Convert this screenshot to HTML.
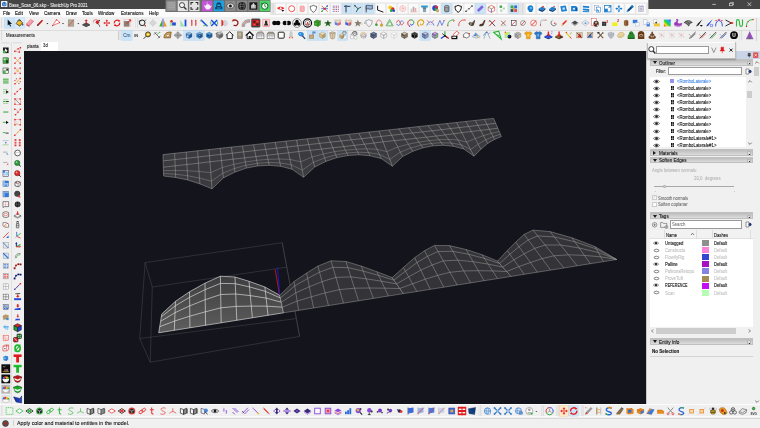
<!DOCTYPE html>
<html lang="en"><head><meta charset="utf-8"><title>Base_Scan_06.skp - SketchUp Pro 2021</title>
<style>
*{box-sizing:border-box;margin:0;padding:0}
html,body{width:760px;height:428px;overflow:hidden;background:#f0f0f0}
body{font-family:"Liberation Sans",sans-serif;font-size:4.5px;color:#000;position:relative;line-height:1}
.a{position:absolute}
.t{position:absolute;white-space:nowrap;line-height:1;transform-origin:0 0;opacity:.99}
#title{left:0;top:0;width:760px;height:8.5px;background:#454545}
#menu{left:0;top:8.5px;width:760px;height:8.5px;background:#fbfbfb}
#tb1{left:0;top:17px;width:760px;height:12.5px;background:#f0f0f0}
#tb2{left:0;top:29.5px;width:760px;height:11.7px;background:#f0f0f0;border-top:.4px solid #dcdcdc}
#tabs{left:24px;top:41.2px;width:622px;height:9.6px;background:#f0f0f0}
#left{left:0;top:41.2px;width:24px;height:362.5px;background:#f0f0f0}
#view{left:24px;top:50.8px;width:622px;height:352.8px;background:#14151c}
#bot{left:0;top:403.6px;width:760px;height:14px;background:#f0f0f0}
#status{left:0;top:417.6px;width:760px;height:10.4px;background:#f0f0f0;border-top:.4px solid #d8d8d8}
#tray{left:646px;top:50.5px;width:114px;height:353px;background:#f0f0f0}
.hdr{position:absolute;left:649.5px;width:103.5px;height:6.5px;background:linear-gradient(#bcbcbc,#dcdcdc);border:.3px solid #c0c0c0}
.hdr .t{left:8.4px;top:.6px;font-size:5.1px;color:#111;-webkit-text-stroke:.1px #111;transform:scaleX(.9);transform-origin:0 0}
.hdr i{position:absolute;left:2px;top:1.3px;width:0;height:0;border-left:2px solid transparent;border-right:2px solid transparent;border-top:3px solid #1a1a1a}
.hdr i.r{top:.9px;left:2.6px;border-top:2px solid transparent;border-bottom:2px solid transparent;border-left:3px solid #1a1a1a;border-right:0}
.hdr b{position:absolute;right:1.4px;top:1.2px;width:3.8px;height:3.8px;background:#dedede;border:.3px solid #b8b8b8}
.hdr b:after{content:"";position:absolute;left:1px;top:1.2px;width:1.2px;height:1px;background:#333}
.inp{position:absolute;background:#fff;border:.5px solid #9a9a9a}
.white{position:absolute;background:#fff}
.row{position:absolute;left:649.5px;width:96px;height:7.1px}
.eye{position:absolute;width:5.4px;height:3.2px;border:.5px solid #222;border-radius:50%;background:#333}
.eye:after{content:"";position:absolute;left:1.5px;top:.2px;width:1.3px;height:1.1px;border-radius:50%;background:#ddd}
.eye.off{border-color:#555;background:#fff;border-width:.6px}.eye.off:after{background:transparent}
.sw{position:absolute;width:6.4px;height:6px}
.g{color:#b4b4b4}
</style></head>
<body>
<div class="a" id="title"></div>
<svg class="a" style="left:1.4px;top:1px" width="6.4" height="6.4" viewBox="0 0 16 16"><rect width="16" height="16" rx="2" fill="#f4f8fc"/><path d="M8 2 13.5 5v6L8 14 2.5 11V5z" fill="#1565b8"/><path d="M4 6.3 8 8.4l4-2.1M4 8.6 8 10.7l4-2.1" stroke="#fff" stroke-width="1.1" fill="none"/></svg>
<div class="t" style="left:9.2px;top:3.00px;font-size:5.22px;color:#ededed;-webkit-text-stroke:.1px #ededed;transform:scaleX(0.830);">Base_Scan_06.skp - SketchUp Pro 2021</div>
<svg class="a" style="left:690px;top:0" width="70" height="9" viewBox="0 0 70 9"><path d="M22.3 4.4h3.6" stroke="#fff" stroke-width=".6"/><rect x="39.7" y="3.2" width="2.8" height="2.6" fill="none" stroke="#fff" stroke-width=".5"/><path d="M40.6 3.2v-.8h2.8v2.6h-.9" fill="none" stroke="#fff" stroke-width=".5"/><path d="M57.6 2.4l3.6 3.6m0-3.6l-3.6 3.6" stroke="#fff" stroke-width=".6"/></svg>
<div class="a" id="menu"></div>
<div class="t" style="left:3px;top:11.00px;font-size:5.22px;color:#000;-webkit-text-stroke:.1px #000;transform:scaleX(0.880);">File</div>
<div class="t" style="left:15.4px;top:11.00px;font-size:5.22px;color:#000;-webkit-text-stroke:.1px #000;transform:scaleX(0.880);">Edit</div>
<div class="t" style="left:29px;top:11.00px;font-size:5.22px;color:#000;-webkit-text-stroke:.1px #000;transform:scaleX(0.880);">View</div>
<div class="t" style="left:44.4px;top:11.00px;font-size:5.22px;color:#000;-webkit-text-stroke:.1px #000;transform:scaleX(0.880);">Camera</div>
<div class="t" style="left:66px;top:11.00px;font-size:5.22px;color:#000;-webkit-text-stroke:.1px #000;transform:scaleX(0.880);">Draw</div>
<div class="t" style="left:82.4px;top:11.00px;font-size:5.22px;color:#000;-webkit-text-stroke:.1px #000;transform:scaleX(0.880);">Tools</div>
<div class="t" style="left:98.4px;top:11.00px;font-size:5.22px;color:#000;-webkit-text-stroke:.1px #000;transform:scaleX(0.880);">Window</div>
<div class="t" style="left:121.4px;top:11.00px;font-size:5.22px;color:#000;-webkit-text-stroke:.1px #000;transform:scaleX(0.880);">Extensions</div>
<div class="t" style="left:149px;top:11.00px;font-size:5.22px;color:#000;-webkit-text-stroke:.1px #000;transform:scaleX(0.880);">Help</div>
<div class="a" id="tb1"></div><div class="a" id="tb2"></div>
<div class="a" style="left:755.8px;top:17.6px;width:.4px;height:23.4px;background:#d4d4d4"></div>
<div class="t" style="left:6px;top:33.20px;font-size:4.99px;color:#222;-webkit-text-stroke:.1px #222;transform:scaleX(0.880);">Measurements</div>
<div class="a" style="left:118px;top:30.6px;width:.4px;height:9.6px;background:#cfcfcf"></div>
<div class="a" id="tabs"></div>
<div class="a" style="left:25.2px;top:42.6px;width:14.4px;height:8.2px;background:#eeeeee"></div>
<div class="a" style="left:40.6px;top:41.7px;width:17.2px;height:9.1px;background:#fff"></div>
<div class="t" style="left:26.6px;top:45.30px;font-size:4.87px;color:#222;-webkit-text-stroke:.1px #222;transform:scaleX(0.880);">pianta</div>
<div class="t" style="left:42.6px;top:44.40px;font-size:4.87px;color:#222;-webkit-text-stroke:.1px #222;transform:scaleX(0.880);">3d</div>
<div class="a" id="left"></div>
<div class="a" style="left:10.7px;top:41.6px;width:1.5px;height:362px;background:#e0e0e0"></div>
<div class="a" id="view"></div>
<svg class="a" style="left:0;top:0" width="760" height="428" viewBox="0 0 760 428"><polygon points="163.0,154.6 174.6,153.3 186.2,152.1 197.6,150.8 209.0,149.6 220.2,148.3 231.4,147.1 242.5,145.9 253.5,144.7 264.4,143.5 275.2,142.3 285.9,141.1 296.6,140.0 307.2,138.8 317.6,137.7 328.1,136.5 338.4,135.4 348.6,134.3 358.8,133.2 368.9,132.1 378.9,131.0 388.9,129.9 398.8,128.8 408.6,127.7 418.3,126.6 427.9,125.6 437.5,124.5 447.0,123.5 456.5,122.5 465.9,121.4 475.2,120.4 484.4,119.4 493.6,118.4 501.4,136.6 494.5,139.4 487.7,143.4 480.9,149.2 474.0,156.2 463.8,149.0 453.6,146.3 443.4,145.3 433.2,145.8 423.0,147.8 412.8,151.3 402.6,156.5 392.4,166.2 381.3,158.6 370.2,155.8 359.1,154.8 348.0,155.5 336.9,157.6 325.8,161.4 314.7,167.0 303.6,177.3 292.2,169.3 280.7,166.3 269.2,165.3 257.8,165.9 246.4,168.1 234.9,172.1 223.4,177.9 212.0,188.8 199.9,183.9 187.8,180.0 175.7,177.5 163.6,176.0" fill="#3b3b3f" stroke="none"/><g fill="none" stroke="#acacac" stroke-width=".45"><polyline points="163.0,154.6 163.6,176.0"/><polyline points="174.6,153.3 175.7,177.5"/><polyline points="186.2,152.1 187.8,180.0"/><polyline points="197.6,150.8 199.9,183.9"/><polyline points="209.0,149.6 212.0,188.8"/><polyline points="220.2,148.3 223.4,177.9"/><polyline points="231.4,147.1 234.9,172.1"/><polyline points="242.5,145.9 246.4,168.1"/><polyline points="253.5,144.7 257.8,165.9"/><polyline points="264.4,143.5 269.2,165.3"/><polyline points="275.2,142.3 280.7,166.3"/><polyline points="285.9,141.1 292.2,169.3"/><polyline points="296.6,140.0 303.6,177.3"/><polyline points="307.2,138.8 314.7,167.0"/><polyline points="317.6,137.7 325.8,161.4"/><polyline points="328.1,136.5 336.9,157.6"/><polyline points="338.4,135.4 348.0,155.5"/><polyline points="348.6,134.3 359.1,154.8"/><polyline points="358.8,133.2 370.2,155.8"/><polyline points="368.9,132.1 381.3,158.6"/><polyline points="378.9,131.0 392.4,166.2"/><polyline points="388.9,129.9 402.6,156.5"/><polyline points="398.8,128.8 412.8,151.3"/><polyline points="408.6,127.7 423.0,147.8"/><polyline points="418.3,126.6 433.2,145.8"/><polyline points="427.9,125.6 443.4,145.3"/><polyline points="437.5,124.5 453.6,146.3"/><polyline points="447.0,123.5 463.8,149.0"/><polyline points="456.5,122.5 474.0,156.2"/><polyline points="465.9,121.4 480.9,149.2"/><polyline points="475.2,120.4 487.7,143.4"/><polyline points="484.4,119.4 494.5,139.4"/><polyline points="493.6,118.4 501.4,136.6"/><polyline points="163.0,154.6 174.6,153.3 186.2,152.1 197.6,150.8 209.0,149.6 220.2,148.3 231.4,147.1 242.5,145.9 253.5,144.7 264.4,143.5 275.2,142.3 285.9,141.1 296.6,140.0 307.2,138.8 317.6,137.7 328.1,136.5 338.4,135.4 348.6,134.3 358.8,133.2 368.9,132.1 378.9,131.0 388.9,129.9 398.8,128.8 408.6,127.7 418.3,126.6 427.9,125.6 437.5,124.5 447.0,123.5 456.5,122.5 465.9,121.4 475.2,120.4 484.4,119.4 493.6,118.4"/><polyline points="163.6,176.0 175.7,177.5 187.8,180.0 199.9,183.9 212.0,188.8 223.4,177.9 234.9,172.1 246.4,168.1 257.8,165.9 269.2,165.3 280.7,166.3 292.2,169.3 303.6,177.3 314.7,167.0 325.8,161.4 336.9,157.6 348.0,155.5 359.1,154.8 370.2,155.8 381.3,158.6 392.4,166.2 402.6,156.5 412.8,151.3 423.0,147.8 433.2,145.8 443.4,145.3 453.6,146.3 463.8,149.0 474.0,156.2 480.9,149.2 487.7,143.4 494.5,139.4 501.4,136.6"/><polyline points="163.2,160.9 174.9,159.6 186.5,158.3 198.0,157.0 209.4,155.7 220.9,154.4 232.2,153.2 243.5,151.9 254.7,150.6 265.7,149.4 276.5,148.2 287.2,147.0 297.7,145.8 308.7,144.6 319.6,143.4 330.4,142.2 341.1,141.0 351.5,139.8 361.6,138.7 371.5,137.5 381.0,136.4 391.7,135.3 402.1,134.1 412.4,133.0 422.4,131.9 432.0,130.8 441.4,129.7 450.4,128.6 459.1,127.6 468.6,126.5 477.9,125.4 486.9,124.4 495.7,123.3"/><polyline points="163.4,167.2 175.2,165.8 186.9,164.5 198.5,163.2 209.9,161.8 221.5,160.5 233.1,159.2 244.6,157.9 255.9,156.6 267.0,155.3 277.9,154.0 288.5,152.8 298.8,151.5 310.2,150.3 321.6,149.1 332.8,147.8 343.8,146.6 354.3,145.4 364.4,144.2 374.0,143.0 383.1,141.8 394.4,140.6 405.4,139.5 416.2,138.3 426.5,137.2 436.1,136.0 445.2,134.9 453.8,133.8 461.8,132.6 471.3,131.5 480.6,130.4 489.5,129.3 497.8,128.2"/><polyline points="163.5,170.7 175.4,170.5 187.3,170.7 199.0,171.5 210.7,172.6 222.3,167.5 233.8,164.3 245.3,162.0 256.7,160.3 267.9,159.3 279.0,159.0 290.0,159.4 300.7,161.8 312.0,157.0 323.3,154.0 334.4,151.7 345.5,150.2 356.2,149.2 366.7,148.8 376.9,149.3 386.8,151.6 397.7,147.0 408.4,144.2 418.9,142.1 429.2,140.6 439.0,139.7 448.6,139.4 457.8,139.9 466.7,142.1 475.1,138.6 483.5,135.6 491.5,133.3 499.2,131.6" opacity=".8"/><polyline points="163.5,173.5 175.6,174.2 187.5,175.7 199.5,178.1 211.4,181.2 222.9,173.1 234.4,168.5 245.8,165.3 257.3,163.3 268.6,162.5 279.9,162.9 291.1,164.7 302.2,170.1 313.4,162.3 324.6,157.9 335.8,154.9 346.8,153.0 357.8,152.2 368.6,152.6 379.3,154.3 389.8,159.4 400.3,152.1 410.7,148.0 421.1,145.1 431.3,143.4 441.4,142.7 451.2,143.1 461.0,144.7 470.6,149.6 478.2,144.2 485.7,139.8 493.1,136.6 500.4,134.3" opacity=".8"/></g><g stroke="#505054" stroke-width=".45" fill="none"><line x1="145.1" y1="262.6" x2="152.3" y2="287"/><line x1="145.1" y1="262.6" x2="139.7" y2="338.5"/><line x1="152.3" y1="287" x2="150.2" y2="362.2"/><line x1="139.7" y1="338.5" x2="150.2" y2="362.2"/><line x1="145.1" y1="262.6" x2="282.2" y2="242.7"/><line x1="152.3" y1="287" x2="286.8" y2="267.2"/><line x1="282.2" y1="242.7" x2="286.8" y2="267.2"/><line x1="286.8" y1="267.2" x2="299.6" y2="336.4"/><line x1="150.2" y1="362.2" x2="299.6" y2="336.4"/><line x1="282.2" y1="242.7" x2="296.4" y2="318.6"/><line x1="296.4" y1="318.6" x2="299.6" y2="336.4"/><line x1="139.7" y1="338.5" x2="296.4" y2="318.6"/></g><defs><linearGradient id="gs" x1="0" y1="0" x2="0" y2="1"><stop offset="0" stop-color="#3e3e40"/><stop offset="1" stop-color="#5e5e5e"/></linearGradient></defs><polygon points="158.7,332.8 174.3,330.3 189.9,327.8 205.5,325.3 221.2,322.8 236.8,320.3 252.4,317.8 268.0,315.3 283.6,312.8 279.8,295.3 264.9,287.0 249.0,281.3 235.0,277.0 220.4,276.2 205.0,283.2 189.5,291.8 175.5,301.3 161.8,313.9" fill="url(#gs)"/><g fill="none" stroke="#e8e8e8" stroke-width=".62"><polyline points="158.7,332.8 159.7,326.7 160.6,321.3 161.3,316.8 161.8,313.9"/><polyline points="174.3,330.3 174.7,321.0 175.0,312.7 175.3,305.8 175.5,301.3"/><polyline points="189.9,327.8 189.8,316.2 189.7,305.9 189.6,297.3 189.5,291.8"/><polyline points="205.5,325.3 205.4,311.8 205.2,299.7 205.1,289.7 205.0,283.2"/><polyline points="221.2,322.8 220.9,307.8 220.7,294.5 220.5,283.4 220.4,276.2"/><polyline points="236.8,320.3 236.2,306.4 235.7,294.0 235.3,283.7 235.0,277.0"/><polyline points="252.4,317.8 251.3,306.1 250.3,295.6 249.5,286.9 249.0,281.3"/><polyline points="268.0,315.3 267.0,306.2 266.1,298.1 265.4,291.4 264.9,287.0"/><polyline points="283.6,312.8 282.4,307.2 281.3,302.2 280.4,298.0 279.8,295.3"/><polyline points="158.7,332.8 174.3,330.3 189.9,327.8 205.5,325.3 221.2,322.8 236.8,320.3 252.4,317.8 268.0,315.3 283.6,312.8"/><polyline points="159.7,326.7 174.7,321.0 189.8,316.2 205.4,311.8 220.9,307.8 236.2,306.4 251.3,306.1 267.0,306.2 282.4,307.2"/><polyline points="160.6,321.3 175.0,312.7 189.7,305.9 205.2,299.7 220.7,294.5 235.7,294.0 250.3,295.6 266.1,298.1 281.3,302.2"/><polyline points="161.3,316.8 175.3,305.8 189.6,297.3 205.1,289.7 220.5,283.4 235.3,283.7 249.5,286.9 265.4,291.4 280.4,298.0"/><polyline points="161.8,313.9 175.5,301.3 189.5,291.8 205.0,283.2 220.4,276.2 235.0,277.0 249.0,281.3 264.9,287.0 279.8,295.3"/></g><polygon points="283.6,312.8 298.6,310.4 313.6,308.0 328.5,305.6 343.5,303.2 358.5,300.8 373.4,298.4 388.4,296.0 403.4,293.6 392.2,277.6 376.8,271.7 361.3,266.1 346.0,261.5 331.0,260.8 317.9,266.1 306.6,273.1 294.0,281.5 279.8,295.3" fill="#343438"/><g fill="none" stroke="#aaaaaa" stroke-width=".45"><polyline points="283.6,312.8 282.4,307.2 281.3,302.2 280.4,298.0 279.8,295.3"/><polyline points="298.6,310.4 297.1,301.1 295.8,292.8 294.7,285.9 294.0,281.5"/><polyline points="313.6,308.0 311.3,296.8 309.3,286.8 307.7,278.5 306.6,273.1"/><polyline points="328.5,305.6 325.1,292.9 322.1,281.6 319.5,272.2 317.9,266.1"/><polyline points="343.5,303.2 339.5,289.6 335.9,277.4 332.9,267.3 331.0,260.8"/><polyline points="358.5,300.8 354.5,288.2 350.9,276.9 347.9,267.6 346.0,261.5"/><polyline points="373.4,298.4 369.5,288.0 366.1,278.8 363.2,271.1 361.3,266.1"/><polyline points="388.4,296.0 384.7,288.2 381.4,281.2 378.6,275.4 376.8,271.7"/><polyline points="403.4,293.6 399.8,288.5 396.6,283.9 393.9,280.1 392.2,277.6"/><polyline points="283.6,312.8 298.6,310.4 313.6,308.0 328.5,305.6 343.5,303.2 358.5,300.8 373.4,298.4 388.4,296.0 403.4,293.6"/><polyline points="282.4,307.2 297.1,301.1 311.3,296.8 325.1,292.9 339.5,289.6 354.5,288.2 369.5,288.0 384.7,288.2 399.8,288.5"/><polyline points="281.3,302.2 295.8,292.8 309.3,286.8 322.1,281.6 335.9,277.4 350.9,276.9 366.1,278.8 381.4,281.2 396.6,283.9"/><polyline points="280.4,298.0 294.7,285.9 307.7,278.5 319.5,272.2 332.9,267.3 347.9,267.6 363.2,271.1 378.6,275.4 393.9,280.1"/><polyline points="279.8,295.3 294.0,281.5 306.6,273.1 317.9,266.1 331.0,260.8 346.0,261.5 361.3,266.1 376.8,271.7 392.2,277.6"/></g><polygon points="403.4,293.6 416.8,291.5 430.3,289.3 443.8,287.2 457.2,285.0 470.6,282.9 484.1,280.7 497.6,278.6 511.0,276.4 497.5,261.1 482.0,254.7 466.0,249.5 449.5,245.6 434.5,245.4 424.5,250.7 414.6,257.7 403.4,267.5 392.2,277.6" fill="#343438"/><g fill="none" stroke="#aaaaaa" stroke-width=".45"><polyline points="403.4,293.6 399.8,288.5 396.6,283.9 393.9,280.1 392.2,277.6"/><polyline points="416.8,291.5 412.5,283.8 408.7,276.9 405.5,271.2 403.4,267.5"/><polyline points="430.3,289.3 425.2,279.2 420.8,270.1 417.0,262.6 414.6,257.7"/><polyline points="443.8,287.2 437.6,275.4 432.1,265.0 427.5,256.3 424.5,250.7"/><polyline points="457.2,285.0 449.9,272.3 443.4,260.9 438.0,251.5 434.5,245.4"/><polyline points="470.6,282.9 463.8,270.9 457.8,260.2 452.8,251.3 449.5,245.6"/><polyline points="484.1,280.7 478.3,270.7 473.1,261.7 468.8,254.3 466.0,249.5"/><polyline points="497.6,278.6 492.5,270.9 488.1,264.1 484.4,258.4 482.0,254.7"/><polyline points="511.0,276.4 506.7,271.5 502.8,267.1 499.6,263.5 497.5,261.1"/><polyline points="403.4,293.6 416.8,291.5 430.3,289.3 443.8,287.2 457.2,285.0 470.6,282.9 484.1,280.7 497.6,278.6 511.0,276.4"/><polyline points="399.8,288.5 412.5,283.8 425.2,279.2 437.6,275.4 449.9,272.3 463.8,270.9 478.3,270.7 492.5,270.9 506.7,271.5"/><polyline points="396.6,283.9 408.7,276.9 420.8,270.1 432.1,265.0 443.4,260.9 457.8,260.2 473.1,261.7 488.1,264.1 502.8,267.1"/><polyline points="393.9,280.1 405.5,271.2 417.0,262.6 427.5,256.3 438.0,251.5 452.8,251.3 468.8,254.3 484.4,258.4 499.6,263.5"/><polyline points="392.2,277.6 403.4,267.5 414.6,257.7 424.5,250.7 434.5,245.4 449.5,245.6 466.0,249.5 482.0,254.7 497.5,261.1"/></g><polygon points="511.0,276.4 524.2,274.3 537.4,272.2 550.6,270.1 563.9,268.0 577.1,265.8 590.3,263.7 603.5,261.6 616.7,259.5 616.7,259.5 595.0,246.6 572.0,237.8 550.0,231.6 533.0,230.1 524.1,234.4 515.7,242.1 507.3,250.5 497.5,261.1" fill="#343438"/><g fill="none" stroke="#aaaaaa" stroke-width=".45"><polyline points="511.0,276.4 506.7,271.5 502.8,267.1 499.6,263.5 497.5,261.1"/><polyline points="524.2,274.3 518.8,266.6 513.9,259.8 509.9,254.2 507.3,250.5"/><polyline points="537.4,272.2 530.4,262.5 524.2,253.9 519.0,246.7 515.7,242.1"/><polyline points="550.6,270.1 542.1,258.6 534.5,248.4 528.2,239.9 524.1,234.4"/><polyline points="563.9,268.0 553.9,255.8 545.1,245.0 537.7,235.9 533.0,230.1"/><polyline points="577.1,265.8 568.4,254.8 560.6,245.0 554.2,236.9 550.0,231.6"/><polyline points="590.3,263.7 584.4,255.4 579.2,248.0 574.8,241.8 572.0,237.8"/><polyline points="603.5,261.6 600.8,256.8 598.3,252.5 596.3,248.9 595.0,246.6"/><polyline points="616.7,259.5 616.7,259.5 616.7,259.5 616.7,259.5 616.7,259.5"/><polyline points="511.0,276.4 524.2,274.3 537.4,272.2 550.6,270.1 563.9,268.0 577.1,265.8 590.3,263.7 603.5,261.6 616.7,259.5"/><polyline points="506.7,271.5 518.8,266.6 530.4,262.5 542.1,258.6 553.9,255.8 568.4,254.8 584.4,255.4 600.8,256.8 616.7,259.5"/><polyline points="502.8,267.1 513.9,259.8 524.2,253.9 534.5,248.4 545.1,245.0 560.6,245.0 579.2,248.0 598.3,252.5 616.7,259.5"/><polyline points="499.6,263.5 509.9,254.2 519.0,246.7 528.2,239.9 537.7,235.9 554.2,236.9 574.8,241.8 596.3,248.9 616.7,259.5"/><polyline points="497.5,261.1 507.3,250.5 515.7,242.1 524.1,234.4 533.0,230.1 550.0,231.6 572.0,237.8 595.0,246.6 616.7,259.5"/></g><line x1="275.1" y1="269.4" x2="279.5" y2="294.7" stroke="#c01818" stroke-width=".9"/><line x1="277.4" y1="267.2" x2="279.8" y2="294.7" stroke="#1818d8" stroke-width=".9"/></svg>
<div class="a" id="bot"></div><div class="a" id="status"></div>
<div class="a" style="left:0;top:403.6px;width:760px;height:1.6px;background:#fbfbfb"></div><div class="a" style="left:0;top:416.2px;width:760px;height:1.3px;background:#fbfbfb"></div>
<div class="t" style="left:17px;top:421.00px;font-size:5.68px;color:#111;-webkit-text-stroke:.1px #111;transform:scaleX(0.930);">Apply color and material to entities in the model.</div>
<svg class="a" style="left:1.8px;top:419.6px" width="7" height="7" viewBox="0 0 12 12"><circle cx="6" cy="6" r="5" fill="#555" stroke="#333" stroke-width="1.2"/><circle cx="6" cy="6" r="2.6" fill="#b02828"/></svg>
<div class="a" style="left:13.2px;top:420px;width:.4px;height:6px;background:#d0d0d0"></div>
<div class="a" id="tray"></div>
<div class="a" style="left:646px;top:50.5px;width:.5px;height:353px;background:#c8c8c8"></div>
<div class="a" style="left:647px;top:51px;width:113px;height:7.6px;background:#c9d5e6"></div>
<svg class="a" style="left:746px;top:51.6px" width="13" height="6.4" viewBox="0 0 13 6.4"><path d="M2.2 1.3h2v2.4h-2zM1.6 3.7h3.2M3.2 3.7v1.8" stroke="#333" stroke-width=".6" fill="#555"/><rect x="7.2" y=".5" width="5" height="5.4" fill="#e04848"/><path d="M8.5 1.9l2.4 2.6m0-2.6L8.5 4.5" stroke="#fff" stroke-width=".7"/></svg>
<div class="a" style="left:753.6px;top:58.6px;width:6.4px;height:345px;background:#f0f0f0"></div>
<div class="a" style="left:754.2px;top:67px;width:5.2px;height:8.6px;background:#cdcdcd"></div>
<svg class="a" style="left:754px;top:60px" width="6" height="5" viewBox="0 0 6 5"><path d="M1.2 3.4 3 1.6l1.8 1.8" stroke="#444" stroke-width=".7" fill="none"/></svg>
<svg class="a" style="left:753.6px;top:399px" width="6" height="5" viewBox="0 0 6 5"><path d="M1.2 1.6 3 3.4l1.8-1.8" stroke="#444" stroke-width=".7" fill="none"/></svg>
<div class="hdr" style="top:59px"><i></i><div class="t">Outliner</div><b></b></div>
<div class="t" style="left:655.5px;top:69.50px;font-size:4.87px;color:#111;-webkit-text-stroke:.1px #111;transform:scaleX(0.821);">Filter:</div>
<div class="inp" style="left:667.6px;top:67.2px;width:74px;height:7.5px"></div>
<svg class="a" style="left:745px;top:67.6px" width="7" height="7" viewBox="0 0 14 14"><path d="M2 2h6v10H2z" fill="#fff" stroke="#333" stroke-width="1"/><path d="M7 7 11 3.4v2.2h2v2.8h-2v2.2z" fill="#1a1a1a"/><path d="M7.6 4.4h4.4v5.2H7.6z" fill="#223a8a"/></svg>
<div class="white" style="left:649.5px;top:76.8px;width:103.5px;height:70.4px"></div>
<svg class="a" style="left:652.70px;top:78.60px" width="7" height="5" viewBox="-3.5 -2.5 7 5"><path d="M-3.1 0C-1.8-1.9 1.8-1.9 3.1 0 1.8 1.9-1.8 1.9-3.1 0z" fill="#f4f4f4" stroke="#222" stroke-width=".55"/><circle cx="0" cy="-.1" r="1.25" fill="#1a1a1a"/></svg>
<div class="a" style="left:670.3px;top:78.80px;width:4px;height:4.4px;background:#9494ea"></div>
<div class="t" style="left:676.8px;top:79.95px;font-size:4.81px;color:#3f86e8;-webkit-text-stroke:.1px #3f86e8;transform:scaleX(0.890);">&lt;RomboLaterale&gt;</div>
<svg class="a" style="left:652.70px;top:85.73px" width="7" height="5" viewBox="-3.5 -2.5 7 5"><path d="M-3.1 0C-1.8-1.9 1.8-1.9 3.1 0 1.8 1.9-1.8 1.9-3.1 0z" fill="#f4f4f4" stroke="#222" stroke-width=".55"/><circle cx="0" cy="-.1" r="1.25" fill="#1a1a1a"/></svg>
<svg class="a" style="left:670.6px;top:86.03px" width="3.8" height="4.4" viewBox="0 0 3.8 4.4"><path d="M0 0h1.6v2H0zM2.1 0h1.6v2H2.1zM0 2.3h1.6v2H0zM2.1 2.3h1.6v2H2.1z" fill="#141414"/></svg>
<div class="t" style="left:676.8px;top:87.08px;font-size:4.81px;color:#111;-webkit-text-stroke:.1px #111;transform:scaleX(0.890);">&lt;RomboLaterale&gt;</div>
<svg class="a" style="left:652.70px;top:92.86px" width="7" height="5" viewBox="-3.5 -2.5 7 5"><path d="M-3.1 0C-1.8-1.9 1.8-1.9 3.1 0 1.8 1.9-1.8 1.9-3.1 0z" fill="#f4f4f4" stroke="#222" stroke-width=".55"/><circle cx="0" cy="-.1" r="1.25" fill="#1a1a1a"/></svg>
<svg class="a" style="left:670.6px;top:93.16px" width="3.8" height="4.4" viewBox="0 0 3.8 4.4"><path d="M0 0h1.6v2H0zM2.1 0h1.6v2H2.1zM0 2.3h1.6v2H0zM2.1 2.3h1.6v2H2.1z" fill="#141414"/></svg>
<div class="t" style="left:676.8px;top:94.21px;font-size:4.81px;color:#111;-webkit-text-stroke:.1px #111;transform:scaleX(0.890);">&lt;RomboLaterale&gt;</div>
<svg class="a" style="left:652.70px;top:99.99px" width="7" height="5" viewBox="-3.5 -2.5 7 5"><path d="M-3.1 0C-1.8-1.9 1.8-1.9 3.1 0 1.8 1.9-1.8 1.9-3.1 0z" fill="#f4f4f4" stroke="#222" stroke-width=".55"/><circle cx="0" cy="-.1" r="1.25" fill="#1a1a1a"/></svg>
<svg class="a" style="left:670.6px;top:100.29px" width="3.8" height="4.4" viewBox="0 0 3.8 4.4"><path d="M0 0h1.6v2H0zM2.1 0h1.6v2H2.1zM0 2.3h1.6v2H0zM2.1 2.3h1.6v2H2.1z" fill="#141414"/></svg>
<div class="t" style="left:676.8px;top:101.34px;font-size:4.81px;color:#111;-webkit-text-stroke:.1px #111;transform:scaleX(0.890);">&lt;RomboLaterale&gt;</div>
<svg class="a" style="left:652.70px;top:107.12px" width="7" height="5" viewBox="-3.5 -2.5 7 5"><path d="M-3.1 0C-1.8-1.9 1.8-1.9 3.1 0 1.8 1.9-1.8 1.9-3.1 0z" fill="#f4f4f4" stroke="#222" stroke-width=".55"/><circle cx="0" cy="-.1" r="1.25" fill="#1a1a1a"/></svg>
<svg class="a" style="left:670.6px;top:107.42px" width="3.8" height="4.4" viewBox="0 0 3.8 4.4"><path d="M0 0h1.6v2H0zM2.1 0h1.6v2H2.1zM0 2.3h1.6v2H0zM2.1 2.3h1.6v2H2.1z" fill="#141414"/></svg>
<div class="t" style="left:676.8px;top:108.47px;font-size:4.81px;color:#111;-webkit-text-stroke:.1px #111;transform:scaleX(0.890);">&lt;RomboLaterale&gt;</div>
<svg class="a" style="left:652.70px;top:114.25px" width="7" height="5" viewBox="-3.5 -2.5 7 5"><path d="M-3.1 0C-1.8-1.9 1.8-1.9 3.1 0 1.8 1.9-1.8 1.9-3.1 0z" fill="#f4f4f4" stroke="#222" stroke-width=".55"/><circle cx="0" cy="-.1" r="1.25" fill="#1a1a1a"/></svg>
<svg class="a" style="left:670.6px;top:114.55px" width="3.8" height="4.4" viewBox="0 0 3.8 4.4"><path d="M0 0h1.6v2H0zM2.1 0h1.6v2H2.1zM0 2.3h1.6v2H0zM2.1 2.3h1.6v2H2.1z" fill="#141414"/></svg>
<div class="t" style="left:676.8px;top:115.60px;font-size:4.81px;color:#111;-webkit-text-stroke:.1px #111;transform:scaleX(0.890);">&lt;RomboLaterale&gt;</div>
<svg class="a" style="left:652.70px;top:121.38px" width="7" height="5" viewBox="-3.5 -2.5 7 5"><path d="M-3.1 0C-1.8-1.9 1.8-1.9 3.1 0 1.8 1.9-1.8 1.9-3.1 0z" fill="#f4f4f4" stroke="#222" stroke-width=".55"/><circle cx="0" cy="-.1" r="1.25" fill="#1a1a1a"/></svg>
<svg class="a" style="left:670.6px;top:121.68px" width="3.8" height="4.4" viewBox="0 0 3.8 4.4"><path d="M0 0h1.6v2H0zM2.1 0h1.6v2H2.1zM0 2.3h1.6v2H0zM2.1 2.3h1.6v2H2.1z" fill="#141414"/></svg>
<div class="t" style="left:676.8px;top:122.73px;font-size:4.81px;color:#111;-webkit-text-stroke:.1px #111;transform:scaleX(0.890);">&lt;RomboLaterale&gt;</div>
<svg class="a" style="left:652.70px;top:128.51px" width="7" height="5" viewBox="-3.5 -2.5 7 5"><path d="M-3.1 0C-1.8-1.9 1.8-1.9 3.1 0 1.8 1.9-1.8 1.9-3.1 0z" fill="#f4f4f4" stroke="#222" stroke-width=".55"/><circle cx="0" cy="-.1" r="1.25" fill="#1a1a1a"/></svg>
<svg class="a" style="left:670.6px;top:128.81px" width="3.8" height="4.4" viewBox="0 0 3.8 4.4"><path d="M0 0h1.6v2H0zM2.1 0h1.6v2H2.1zM0 2.3h1.6v2H0zM2.1 2.3h1.6v2H2.1z" fill="#141414"/></svg>
<div class="t" style="left:676.8px;top:129.86px;font-size:4.81px;color:#111;-webkit-text-stroke:.1px #111;transform:scaleX(0.890);">&lt;RomboLaterale&gt;</div>
<svg class="a" style="left:652.70px;top:135.64px" width="7" height="5" viewBox="-3.5 -2.5 7 5"><path d="M-3.1 0C-1.8-1.9 1.8-1.9 3.1 0 1.8 1.9-1.8 1.9-3.1 0z" fill="#f4f4f4" stroke="#222" stroke-width=".55"/><circle cx="0" cy="-.1" r="1.25" fill="#1a1a1a"/></svg>
<svg class="a" style="left:670.6px;top:135.94px" width="3.8" height="4.4" viewBox="0 0 3.8 4.4"><path d="M0 0h1.6v2H0zM2.1 0h1.6v2H2.1zM0 2.3h1.6v2H0zM2.1 2.3h1.6v2H2.1z" fill="#141414"/></svg>
<div class="t" style="left:676.8px;top:136.99px;font-size:4.81px;color:#111;-webkit-text-stroke:.1px #111;transform:scaleX(0.902);">&lt;RomboLaterale#1&gt;</div>
<svg class="a" style="left:652.70px;top:142.77px" width="7" height="5" viewBox="-3.5 -2.5 7 5"><path d="M-3.1 0C-1.8-1.9 1.8-1.9 3.1 0 1.8 1.9-1.8 1.9-3.1 0z" fill="#f4f4f4" stroke="#222" stroke-width=".55"/><circle cx="0" cy="-.1" r="1.25" fill="#1a1a1a"/></svg>
<svg class="a" style="left:670.6px;top:143.07px" width="3.8" height="4.4" viewBox="0 0 3.8 4.4"><path d="M0 0h1.6v2H0zM2.1 0h1.6v2H2.1zM0 2.3h1.6v2H0zM2.1 2.3h1.6v2H2.1z" fill="#141414"/></svg>
<div class="t" style="left:676.8px;top:144.12px;font-size:4.81px;color:#111;-webkit-text-stroke:.1px #111;transform:scaleX(0.902);">&lt;RomboLaterale#1&gt;</div>
<div class="a" style="left:746.2px;top:77px;width:6.6px;height:70px;background:#f1f1f1"></div>
<div class="a" style="left:746.8px;top:91px;width:5.4px;height:6.6px;background:#cdcdcd"></div>
<svg class="a" style="left:746.5px;top:78.6px" width="6" height="5" viewBox="0 0 6 5"><path d="M1.2 3.4 3 1.6l1.8 1.8" stroke="#444" stroke-width=".7" fill="none"/></svg>
<svg class="a" style="left:746.5px;top:141px" width="6" height="5" viewBox="0 0 6 5"><path d="M1.2 1.6 3 3.4l1.8-1.8" stroke="#444" stroke-width=".7" fill="none"/></svg>
<div class="hdr" style="top:149.2px"><i class="r"></i><div class="t">Materials</div><b></b></div>
<div class="hdr" style="top:156.9px"><i></i><div class="t">Soften Edges</div><b></b></div>
<div class="t" style="left:652px;top:168.50px;font-size:4.76px;color:#b6b6b6;-webkit-text-stroke:.1px #b6b6b6;transform:scaleX(0.882);">Angle between normals:</div>
<div class="t" style="left:693.8px;top:177.10px;font-size:4.76px;color:#b6b6b6;-webkit-text-stroke:.1px #b6b6b6;transform:scaleX(0.914);">20,0&nbsp; degrees</div>
<div class="a" style="left:654px;top:186.2px;width:80px;height:.6px;background:#a8a8a8"></div>
<div class="a" style="left:663px;top:184.8px;width:2.5px;height:3.6px;background:#dcdcdc;border:.4px solid #b0b0b0;border-radius:1px"></div>
<div class="a" style="left:654.5px;top:190.6px;width:.5px;height:1.2px;background:#ccc"></div><div class="a" style="left:733.5px;top:190.6px;width:.5px;height:1.2px;background:#ccc"></div>
<div class="a" style="left:651.9px;top:194.7px;width:4.9px;height:5.2px;background:#fafafa;border:.4px solid #cdcdcd"></div>
<svg class="a" style="left:652.3px;top:195.2px" width="4.2" height="4.2" viewBox="0 0 4 4"><path d="M.7 2l1 1L3.4.8" stroke="#c0c0c0" stroke-width=".6" fill="none"/></svg>
<div class="a" style="left:651.9px;top:201.6px;width:4.9px;height:5.2px;background:#fdfdfd;border:.4px solid #cdcdcd"></div>
<div class="t" style="left:658px;top:196.70px;font-size:4.76px;color:#707070;-webkit-text-stroke:.1px #707070;transform:scaleX(0.866);">Smooth normals</div>
<div class="t" style="left:658px;top:203.20px;font-size:4.76px;color:#707070;-webkit-text-stroke:.1px #707070;transform:scaleX(0.888);">Soften coplanar</div>
<div class="hdr" style="top:212.4px"><i></i><div class="t">Tags</div><b></b></div>
<svg class="a" style="left:650.6px;top:220.6px" width="18" height="8" viewBox="0 0 18 8"><circle cx="3.6" cy="3.8" r="2.3" fill="none" stroke="#444" stroke-width=".5"/><path d="M2.4 3.8h2.4M3.6 2.6V5" stroke="#444" stroke-width=".5"/><path d="M9.6 1.6h2.2l.6.8h3.4v4h-6.2z" fill="none" stroke="#444" stroke-width=".5"/><circle cx="15.4" cy="6" r="1.5" fill="#f0f0f0" stroke="#444" stroke-width=".45"/><path d="M14.6 6h1.6M15.4 5.2v1.6" stroke="#444" stroke-width=".4"/></svg>
<div class="inp" style="left:670px;top:220.4px;width:71.6px;height:8.2px"></div>
<div class="t" style="left:672.4px;top:223.40px;font-size:4.76px;color:#808080;-webkit-text-stroke:.1px #808080;transform:scaleX(0.880);">Search</div>
<svg class="a" style="left:745px;top:221px" width="7" height="7" viewBox="0 0 14 14"><path d="M2 2h6v10H2z" fill="#fff" stroke="#333" stroke-width="1"/><path d="M7 7 11 3.4v2.2h2v2.8h-2v2.2z" fill="#1a1a1a"/><path d="M7.6 4.4h4.4v5.2H7.6z" fill="#223a8a"/></svg>
<div class="white" style="left:649.5px;top:230px;width:103.5px;height:105px"></div>
<div class="a" style="left:649.5px;top:230px;width:103.5px;height:8.8px;background:#f2f2f2;border-bottom:.4px solid #e0e0e0"></div>
<div class="a" style="left:663.6px;top:230px;width:.4px;height:8.8px;background:#dcdcdc"></div>
<div class="a" style="left:696px;top:230px;width:.4px;height:8.8px;background:#dcdcdc"></div>
<div class="a" style="left:711.8px;top:230px;width:.4px;height:8.8px;background:#dcdcdc"></div>
<div class="a" style="left:749.6px;top:230px;width:.4px;height:8.8px;background:#dcdcdc"></div>
<div class="t" style="left:666px;top:233.90px;font-size:4.76px;color:#111;-webkit-text-stroke:.1px #111;transform:scaleX(0.880);">Name</div>
<div class="t" style="left:714px;top:233.90px;font-size:4.76px;color:#111;-webkit-text-stroke:.1px #111;transform:scaleX(0.880);">Dashes</div>
<svg class="a" style="left:689.6px;top:232.4px" width="5" height="4" viewBox="0 0 5 4"><path d="M1 3 2.5 1.2 4 3" stroke="#333" stroke-width=".6" fill="none"/></svg>
<svg class="a" style="left:653.10px;top:240.50px" width="6" height="4.3" viewBox="-3.5 -2.5 7 5"><path d="M-3.1 0C-1.8-1.9 1.8-1.9 3.1 0 1.8 1.9-1.8 1.9-3.1 0z" fill="#f4f4f4" stroke="#222" stroke-width=".55"/><circle cx="0" cy="-.1" r="1.25" fill="#1a1a1a"/></svg>
<div class="t" style="left:664.8px;top:241.70px;font-size:4.76px;color:#111;-webkit-text-stroke:.1px #111;transform:scaleX(0.892);">Untagged</div>
<div class="sw" style="left:702.2px;top:240.00px;background:#8f8f8f"></div>
<div class="t" style="left:714px;top:241.70px;font-size:4.76px;color:#111;-webkit-text-stroke:.1px #111;transform:scaleX(0.880);">Default</div>
<svg class="a" style="left:653.10px;top:247.62px" width="7" height="5" viewBox="-3.5 -2.5 7 5"><path d="M-2.7 0C-1.6-1.7 1.6-1.7 2.7 0 1.6 1.7-1.6 1.7-2.7 0z" fill="#fff" stroke="#333" stroke-width=".6"/></svg>
<div class="t" style="left:664.8px;top:248.82px;font-size:4.76px;color:#c0c0c0;-webkit-text-stroke:.1px #c0c0c0;transform:scaleX(0.880);">Constructo</div>
<div class="sw" style="left:702.2px;top:247.12px;background:#ff82da"></div>
<div class="t" style="left:714px;top:248.82px;font-size:4.76px;color:#c4c4c4;-webkit-text-stroke:.1px #c4c4c4;transform:scaleX(0.880);">Default</div>
<svg class="a" style="left:653.10px;top:254.74px" width="7" height="5" viewBox="-3.5 -2.5 7 5"><path d="M-2.7 0C-1.6-1.7 1.6-1.7 2.7 0 1.6 1.7-1.6 1.7-2.7 0z" fill="#fff" stroke="#333" stroke-width=".6"/></svg>
<div class="t" style="left:664.8px;top:255.94px;font-size:4.76px;color:#c0c0c0;-webkit-text-stroke:.1px #c0c0c0;transform:scaleX(0.880);">FlowifyRig</div>
<div class="sw" style="left:702.2px;top:254.24px;background:#3446d2"></div>
<div class="t" style="left:714px;top:255.94px;font-size:4.76px;color:#c4c4c4;-webkit-text-stroke:.1px #c4c4c4;transform:scaleX(0.880);">Default</div>
<svg class="a" style="left:653.10px;top:261.86px" width="6" height="4.3" viewBox="-3.5 -2.5 7 5"><path d="M-3.1 0C-1.8-1.9 1.8-1.9 3.1 0 1.8 1.9-1.8 1.9-3.1 0z" fill="#f4f4f4" stroke="#222" stroke-width=".55"/><circle cx="0" cy="-.1" r="1.25" fill="#1a1a1a"/></svg>
<div class="t" style="left:664.8px;top:263.06px;font-size:4.76px;color:#111;-webkit-text-stroke:.1px #111;transform:scaleX(0.882);">Palline</div>
<div class="sw" style="left:702.2px;top:261.36px;background:#a611c4"></div>
<div class="t" style="left:714px;top:263.06px;font-size:4.76px;color:#111;-webkit-text-stroke:.1px #111;transform:scaleX(0.880);">Default</div>
<svg class="a" style="left:653.10px;top:268.98px" width="7" height="5" viewBox="-3.5 -2.5 7 5"><path d="M-2.7 0C-1.6-1.7 1.6-1.7 2.7 0 1.6 1.7-1.6 1.7-2.7 0z" fill="#fff" stroke="#333" stroke-width=".6"/></svg>
<div class="t" style="left:664.8px;top:270.18px;font-size:4.76px;color:#c0c0c0;-webkit-text-stroke:.1px #c0c0c0;transform:scaleX(0.880);">PoltronaRetopo</div>
<div class="sw" style="left:702.2px;top:268.48px;background:#8682e0"></div>
<div class="t" style="left:714px;top:270.18px;font-size:4.76px;color:#c4c4c4;-webkit-text-stroke:.1px #c4c4c4;transform:scaleX(0.880);">Default</div>
<svg class="a" style="left:653.10px;top:276.10px" width="7" height="5" viewBox="-3.5 -2.5 7 5"><path d="M-2.7 0C-1.6-1.7 1.6-1.7 2.7 0 1.6 1.7-1.6 1.7-2.7 0z" fill="#fff" stroke="#333" stroke-width=".6"/></svg>
<div class="t" style="left:664.8px;top:277.30px;font-size:4.76px;color:#c0c0c0;-webkit-text-stroke:.1px #c0c0c0;transform:scaleX(0.880);">ProveTuft</div>
<div class="sw" style="left:702.2px;top:275.60px;background:#a48a56"></div>
<div class="t" style="left:714px;top:277.30px;font-size:4.76px;color:#c4c4c4;-webkit-text-stroke:.1px #c4c4c4;transform:scaleX(0.880);">Default</div>
<svg class="a" style="left:653.10px;top:283.22px" width="6" height="4.3" viewBox="-3.5 -2.5 7 5"><path d="M-3.1 0C-1.8-1.9 1.8-1.9 3.1 0 1.8 1.9-1.8 1.9-3.1 0z" fill="#f4f4f4" stroke="#222" stroke-width=".55"/><circle cx="0" cy="-.1" r="1.25" fill="#1a1a1a"/></svg>
<div class="t" style="left:664.8px;top:284.42px;font-size:4.76px;color:#111;-webkit-text-stroke:.1px #111;transform:scaleX(0.770);">REFERENCE</div>
<div class="sw" style="left:702.2px;top:282.72px;background:#c40ff4"></div>
<div class="t" style="left:714px;top:284.42px;font-size:4.76px;color:#111;-webkit-text-stroke:.1px #111;transform:scaleX(0.880);">Default</div>
<svg class="a" style="left:653.10px;top:290.34px" width="7" height="5" viewBox="-3.5 -2.5 7 5"><path d="M-2.7 0C-1.6-1.7 1.6-1.7 2.7 0 1.6 1.7-1.6 1.7-2.7 0z" fill="#fff" stroke="#333" stroke-width=".6"/></svg>
<div class="t" style="left:664.8px;top:291.54px;font-size:4.76px;color:#c0c0c0;-webkit-text-stroke:.1px #c0c0c0;transform:scaleX(0.880);">Scan</div>
<div class="sw" style="left:702.2px;top:289.84px;background:#b4ffb4"></div>
<div class="t" style="left:714px;top:291.54px;font-size:4.76px;color:#c4c4c4;-webkit-text-stroke:.1px #c4c4c4;transform:scaleX(0.880);">Default</div>
<div class="a" style="left:649.5px;top:327.4px;width:103.5px;height:7.4px;background:#f1f1f1"></div>
<div class="a" style="left:656px;top:328.2px;width:80px;height:5.8px;background:#cdcdcd"></div>
<svg class="a" style="left:650px;top:328px" width="5" height="6" viewBox="0 0 5 6"><path d="M3.2 1.4 1.6 3l1.6 1.6" stroke="#444" stroke-width=".7" fill="none"/></svg>
<svg class="a" style="left:747px;top:328px" width="5" height="6" viewBox="0 0 5 6"><path d="M1.8 1.4 3.4 3 1.8 4.6" stroke="#444" stroke-width=".7" fill="none"/></svg>
<div class="hdr" style="top:338.2px"><i></i><div class="t">Entity Info</div><b></b></div>
<div class="t" style="left:652px;top:349.80px;font-size:4.87px;color:#111;-webkit-text-stroke:.1px #111;transform:scaleX(0.922);font-weight:bold">No Selection</div>
<div class="a" style="left:650px;top:355.8px;width:102.6px;height:.5px;background:#d4d4d4"></div>
<div class="a" style="left:646.6px;top:41.5px;width:89.2px;height:17.5px;background:#f0f0f0;border:.4px solid #bdbdbd;box-shadow:0 .6px 1.2px rgba(0,0,0,.25)"></div>
<div class="a" style="left:647px;top:41.9px;width:88.4px;height:1.4px;background:#fcfcfc"></div>
<div class="inp" style="left:656.4px;top:46px;width:52.4px;height:8.4px"></div>
<svg class="a" style="left:647.6px;top:46px" width="8" height="8" viewBox="0 0 8 8"><circle cx="3.3" cy="3.1" r="2.5" fill="#fff" stroke="#2a2a2a" stroke-width=".95"/><path d="M5.1 5 7.4 7.4" stroke="#2a2a2a" stroke-width="1.4"/></svg>
<svg class="a" style="left:710px;top:46px" width="26" height="8" viewBox="0 0 26 8"><path d="M1.6 1.6 3.8 6.6 6 1.6" stroke="#777" stroke-width=".75" fill="none"/><path d="M11 1.2h2.6v2.6l.9 1.1h-4.4l.9-1.1zM12.3 4.9v2.4" fill="#e01818" stroke="#e01818" stroke-width=".5"/><path d="M19.6 2.6l3 3m0-3l-3 3" stroke="#111" stroke-width=".9"/></svg>
<svg class="a" style="left:0;top:0;filter:blur(.25px)" width="760" height="428" viewBox="0 0 760 428"><rect x="165.4" y="0" width="105.4" height="12" fill="#6c6c6c"/><rect x="166.20000000000002" y="0.6" width="10.2" height="10.6" fill="#8c8c8c"/><g transform="translate(171.3,5.9)"><path d="M-3.4 -3.6L-3.4 3.6" stroke="#b8b8b8" stroke-width="0.45" fill="none"/><path d="M-3.6 -3.4L3.6 -3.4" stroke="#b8b8b8" stroke-width="0.45" fill="none"/><path d="M-1.7 -3.6L-1.7 3.6" stroke="#b8b8b8" stroke-width="0.45" fill="none"/><path d="M-3.6 -1.7L3.6 -1.7" stroke="#b8b8b8" stroke-width="0.45" fill="none"/><path d="M0.0 -3.6L0.0 3.6" stroke="#b8b8b8" stroke-width="0.45" fill="none"/><path d="M-3.6 0.0L3.6 0.0" stroke="#b8b8b8" stroke-width="0.45" fill="none"/><path d="M1.6999999999999997 -3.6L1.6999999999999997 3.6" stroke="#b8b8b8" stroke-width="0.45" fill="none"/><path d="M-3.6 1.6999999999999997L3.6 1.6999999999999997" stroke="#b8b8b8" stroke-width="0.45" fill="none"/><path d="M3.4 -3.6L3.4 3.6" stroke="#b8b8b8" stroke-width="0.45" fill="none"/><path d="M-3.6 3.4L3.6 3.4" stroke="#b8b8b8" stroke-width="0.45" fill="none"/></g><rect x="177.70000000000002" y="0.6" width="10.2" height="10.6" fill="#e4e4e4"/><g transform="translate(182.8,5.9)"><circle cx="-0.8" cy="-0.8" r="2.5" fill="#f8f8f8" stroke="#333" stroke-width="0.9"/><path d="M1.1 1.1L3.6 3.6" stroke="#333" stroke-width="1.3" fill="none"/></g><rect x="189.3" y="0.6" width="10.2" height="10.6" fill="#e4e4e4"/><g transform="translate(194.4,5.9)"><path d="M-3.4-1.2v-2.2h2.2M1.2-3.4h2.2v2.2M3.4 1.2v2.2H1.2M-1.2 3.4h-2.2V1.2" fill="none" stroke="#2a2a2a" stroke-width="1.1" /></g><rect x="202.1" y="0.6" width="10.2" height="10.6" fill="#c255d6"/><g transform="translate(207.2,5.9)"><path d="M-3.6-.6c1 0 1.4.4 1.8 1 .2-1.4 1.2-2 2.4-2s2.2.6 2.4 2l1.2-1.2v1.4L3 2.4c-.4.9-1.4 1.2-2.4 1.2S-1.4 3.3-1.8 2.4C-2.4 1.2-2.6.4-3.6-.6zM0-2.4c.5 0 .8-.2.8-.5S.5-3.4 0-3.4s-.8.2-.8.5.3.5.8.5z" fill="#fbeefe" /></g><rect x="213.70000000000002" y="0.6" width="10.2" height="10.6" fill="#1da2e4"/><g transform="translate(218.8,5.9)"><path d="M-2.6-.6C-2.6-2.6-1.4-3.6 0-3.6S2.6-2.6 2.6-.6V1h1v2.4h-7.2V1h1z" fill="#123c5e" /><rect x="-1.6" y="-1.4" width="3.2" height="1.6" fill="#1da2e4"/><rect x="-2" y="1.6" width="4" height="1" fill="#1da2e4"/></g><rect x="225.3" y="0.6" width="10.2" height="10.6" fill="#8a8a8a"/><g transform="translate(230.4,5.9)"><path d="M-4 0C-2.6-2.2-1.2-2.8 0-2.8S2.6-2.2 4 0C2.6 2.2 1.2 2.8 0 2.8S-2.6 2.2-4 0z" fill="#dcdcdc" stroke="#222" stroke-width="0.6" /><circle cx="0" cy="0" r="1.5" fill="#1a1a1a"/></g><rect x="236.9" y="0.6" width="10.2" height="10.6" fill="#8a8a8a"/><g transform="translate(242.0,5.9)"><circle cx="0" cy="0" r="3.9" fill="#1c1c1c"/><path d="M-3.6-.6C-1.6-2 1.6-2 3.6-.6M-3.4 1.4C-1.4.2 1.4.2 3.4 1.4M-1-3.6C-2 -1-2 1.4-1 3.6M1.4-3.4c1 2.4 1 4.6 0 6.8" fill="none" stroke="#9a9a9a" stroke-width="0.45" /></g><rect x="248.3" y="0.6" width="10.2" height="10.6" fill="#8a8a8a"/><g transform="translate(253.4,5.9)"><rect x="-4" y="-3.6" width="8" height="7.4" fill="#1c1c1c"/><rect x="-2.4" y="-1" width="4.8" height="3.6" fill="#bdbdbd"/><path d="M0-3l1.6 1.8h-3.2z" fill="#e8e8e8" /><rect x="-0.6" y="-1.4" width="1.2" height="2.2" fill="#e8e8e8"/></g><rect x="259.7" y="0.6" width="10.2" height="10.6" fill="#4fd466"/><g transform="translate(264.8,5.9)"><circle cx="0" cy="0.2" r="3.2" fill="#f2fff2" stroke="#0d6a2a" stroke-width="1"/><path d="M0-1.8V.4l1.6 1" fill="none" stroke="#0d6a2a" stroke-width="0.8" /><path d="M-3.8-1.6l1-1.8.9 1.8z" fill="#0d6a2a" /></g><rect x="270.6" y="0" width="377.6" height="14.6" fill="#e8e8e8" stroke="#c4c4c4" stroke-width="0.3"/><rect x="270.8" y="0" width="377.2" height="2.4" fill="#fbfbfb"/><path d="M273 3V13.4" stroke="#b8b8b8" stroke-width=".8" stroke-dasharray=".5 .5"/><rect x="519.6" y="2.4" width="1" height="12" fill="#e0e0e0"/><path d="M522.6 3V13.4" stroke="#b8b8b8" stroke-width=".8" stroke-dasharray=".5 .5"/><rect x="275.8" y="3.6" width="9.8" height="10.2" fill="#fafafa" stroke="#e4e4e4" stroke-width="0.3"/><g transform="translate(280.7,8.7)"><path d="M-3.6-.4C-2.2-2.4 2.2-2.4 3.6-.4 2.2 1.4-2.2 1.4-3.6-.4z" fill="#f02020" /><circle cx="0" cy="-0.5" r="1" fill="#fff"/><path d="M.6 1.2h3l-1.5 1.8z" fill="#111" /></g><rect x="286.8" y="3.6" width="9.8" height="10.2" fill="#fafafa" stroke="#e4e4e4" stroke-width="0.3"/><g transform="translate(291.7,8.7)"><circle cx="0" cy="0" r="3" fill="#fff" stroke="#f03030" stroke-width="0.8"/></g><rect x="297.3" y="3.6" width="9.8" height="10.2" fill="#fafafa" stroke="#e4e4e4" stroke-width="0.3"/><g transform="translate(302.2,8.7)"><rect x="-2.2" y="-2.8" width="4.4" height="5.8" fill="#f8b4b4" stroke="#f07070" stroke-width="0.4" rx="1"/></g><rect x="308.5" y="3.6" width="9.8" height="10.2" fill="#fafafa" stroke="#e4e4e4" stroke-width="0.3"/><g transform="translate(313.4,8.7)"><path d="M0-3.4C1.2-2.6 2.4-2.4 3.2-2.4 3.2.8 2 2.6 0 3.6-2 2.6-3.2.8-3.2-2.4-2.4-2.4-1.2-2.6 0-3.4z" fill="#fff" stroke="#333" stroke-width="0.7" /></g><rect x="319.70000000000005" y="3.6" width="9.8" height="10.2" fill="#fafafa" stroke="#e4e4e4" stroke-width="0.3"/><g transform="translate(324.6,8.7)"><path d="M-3 -3L3 3" stroke="#e02020" stroke-width="0.7" fill="none"/><path d="M3 -3L-3 3" stroke="#20a020" stroke-width="0.7" fill="none"/><path d="M-3.4 0L3.4 0" stroke="#2040e0" stroke-width="0.7" fill="none"/><circle cx="0" cy="0" r="1" fill="#e02020"/><circle cx="2.6" cy="-2.6" r="0.8" fill="#2040e0"/><circle cx="-2.6" cy="2.6" r="0.8" fill="#20a020"/></g><rect x="330.90000000000003" y="3.6" width="9.8" height="10.2" fill="#fafafa" stroke="#e4e4e4" stroke-width="0.3"/><g transform="translate(335.8,8.7)"><circle cx="-2.6" cy="-2.6" r="0.55" fill="#e03030"/><circle cx="-2.6" cy="-0.9000000000000001" r="0.55" fill="#3050e0"/><circle cx="-2.6" cy="0.7999999999999998" r="0.55" fill="#e03030"/><circle cx="-2.6" cy="2.4999999999999996" r="0.55" fill="#3050e0"/><circle cx="-0.9000000000000001" cy="-2.6" r="0.55" fill="#3050e0"/><circle cx="-0.9000000000000001" cy="-0.9000000000000001" r="0.55" fill="#e03030"/><circle cx="-0.9000000000000001" cy="0.7999999999999998" r="0.55" fill="#3050e0"/><circle cx="-0.9000000000000001" cy="2.4999999999999996" r="0.55" fill="#e03030"/><circle cx="0.7999999999999998" cy="-2.6" r="0.55" fill="#e03030"/><circle cx="0.7999999999999998" cy="-0.9000000000000001" r="0.55" fill="#3050e0"/><circle cx="0.7999999999999998" cy="0.7999999999999998" r="0.55" fill="#e03030"/><circle cx="0.7999999999999998" cy="2.4999999999999996" r="0.55" fill="#3050e0"/><circle cx="2.4999999999999996" cy="-2.6" r="0.55" fill="#3050e0"/><circle cx="2.4999999999999996" cy="-0.9000000000000001" r="0.55" fill="#e03030"/><circle cx="2.4999999999999996" cy="0.7999999999999998" r="0.55" fill="#3050e0"/><circle cx="2.4999999999999996" cy="2.4999999999999996" r="0.55" fill="#e03030"/></g><rect x="342.1" y="3.6" width="9.8" height="10.2" fill="#cce4f7" stroke="#a8cdee" stroke-width="0.3"/><g transform="translate(347.0,8.7)"><path d="M-3-2.4h6.4M-1-3.6v7.2" fill="none" stroke="#222" stroke-width="0.9" /><circle cx="-1" cy="-2.4" r="0.9" fill="#3a6ea8"/></g><rect x="353.0" y="3.6" width="9.8" height="10.2" fill="#cce4f7" stroke="#a8cdee" stroke-width="0.3"/><g transform="translate(357.9,8.7)"><path d="M-3-3l3 3 3.2-1.6M0 0l-1.6 3.4" fill="none" stroke="#333" stroke-width="0.8" /><circle cx="0" cy="0" r="0.9" fill="#3a8a4a"/><circle cx="-3" cy="-3" r="0.7" fill="#222"/></g><rect x="364.3" y="3.6" width="9.8" height="10.2" fill="#cce4f7" stroke="#a8cdee" stroke-width="0.3"/><g transform="translate(369.2,8.7)"><path d="M-3 3.6V-3.2" fill="none" stroke="#223" stroke-width="0.8" /><path d="M-3-3.2c2-1 3.6.8 6.2-.2v3.6c-2.6 1-4.2-.8-6.2.2z" fill="#9ab4d6" stroke="#223" stroke-width="0.6" /></g><rect x="375.5" y="3.6" width="9.8" height="10.2" fill="#fafafa" stroke="#e4e4e4" stroke-width="0.3"/><g transform="translate(380.4,8.7)"><path d="M-2.8-3v4.4l5.8 2" fill="none" stroke="#1a1a1a" stroke-width="1" /></g><rect x="386.70000000000005" y="3.6" width="9.8" height="10.2" fill="#fafafa" stroke="#e4e4e4" stroke-width="0.3"/><g transform="translate(391.6,8.7)"><circle cx="-1.4" cy="-1.2" r="1.9" fill="#f2c81c"/><circle cx="1.2" cy="0.2" r="1.7" fill="#e02828"/><circle cx="-0.2" cy="1.8" r="1.5" fill="#28a838"/><circle cx="2.2" cy="2" r="1.3" fill="#2848e0"/></g><rect x="397.90000000000003" y="3.6" width="9.8" height="10.2" fill="#fafafa" stroke="#e4e4e4" stroke-width="0.3"/><g transform="translate(402.8,8.7)"><path d="M-3-.6c0-2 2-3 3.6-2.4S3.6-1.6 3 .6 1 3.2-1 2.8-3 1.4-3-.6z" fill="#fbe4e4" stroke="#e8a0a0" stroke-width="0.5" /><path d="M-1.2-.6c1-.8 2-.4 2 .4s-1.2 1-1.4.2" fill="none" stroke="#e07070" stroke-width="0.4" /></g><rect x="408.8" y="3.6" width="9.8" height="10.2" fill="#fafafa" stroke="#e4e4e4" stroke-width="0.3"/><g transform="translate(413.7,8.7)"><rect x="-3" y="0" width="1.6" height="3" fill="#c8c8c8"/><rect x="-1" y="-2" width="1.6" height="5" fill="#b0b0b0"/><rect x="1" y="-0.8" width="1.6" height="3.8" fill="#f0a8a8"/><path d="M-3.6 3.2L3.6 3.2" stroke="#e89090" stroke-width="0.5" fill="none"/></g><rect x="419.6" y="3.6" width="9.8" height="10.2" fill="#fafafa" stroke="#e4e4e4" stroke-width="0.3"/><g transform="translate(424.5,8.7)"><rect x="-3.4" y="-3.2" width="6.8" height="2" fill="#2c9cd0"/><rect x="-1.6" y="-1.2" width="3.2" height="4.6" fill="#8aa2b4"/><rect x="-1.6" y="-1.2" width="3.2" height="1" fill="#2a5e84"/></g><rect x="430.8" y="3.6" width="9.8" height="10.2" fill="#fafafa" stroke="#e4e4e4" stroke-width="0.3"/><g transform="translate(435.7,8.7)"><circle cx="-0.6" cy="-0.6" r="2.9" fill="#2a48d8"/><path d="M-.6-.6L-.6-3.5A2.9 2.9 0 0 1 2.2.1z" fill="#e02828" /><path d="M-.6-.6L2.2.1A2.9 2.9 0 0 1-1.6 2.1z" fill="#30a838" /><circle cx="1.8" cy="2" r="1.7" fill="#c8aa7a"/></g><rect x="441.90000000000003" y="3.6" width="9.8" height="10.2" fill="#cce4f7" stroke="#a8cdee" stroke-width="0.3"/><g transform="translate(446.8,8.7)"><rect x="-2.2" y="-2.6" width="4.4" height="5.6" fill="#9a9a9a" stroke="#333" stroke-width="0.6" rx="1"/><ellipse cx="0" cy="-2.4" rx="2.2" ry="0.9" fill="#c8c8c8" stroke="#333" stroke-width="0.5"/></g><rect x="453.3" y="3.6" width="9.8" height="10.2" fill="#fafafa" stroke="#e4e4e4" stroke-width="0.3"/><g transform="translate(458.2,8.7)"><path d="M0-3.4C1.2-2.6 2.4-2.4 3.2-2.4 3.2.8 2 2.6 0 3.6-2 2.6-3.2.8-3.2-2.4-2.4-2.4-1.2-2.6 0-3.4z" fill="#fff" stroke="#111" stroke-width="1" /></g><rect x="464.1" y="3.6" width="9.8" height="10.2" fill="#fafafa" stroke="#e4e4e4" stroke-width="0.3"/><g transform="translate(469.0,8.7)"><path d="M-3 2.6L3-2.6" fill="none" stroke="#333" stroke-width="0.6" stroke-dasharray="1 .8"/><circle cx="-3" cy="2.6" r="0.8" fill="#222"/><circle cx="3" cy="-2.6" r="0.8" fill="#222"/><circle cx="0" cy="0" r="0.7" fill="#222"/></g><rect x="475.40000000000003" y="3.6" width="9.8" height="10.2" fill="#cce4f7" stroke="#a8cdee" stroke-width="0.3"/><g transform="translate(480.3,8.7)"><path d="M-3.4 1.2L1.6-3.4 3.4-1.4-1.6 3.2z" fill="#9a5ad8" /><path d="M-2.4 2.2L2.6-2.4" fill="none" stroke="#3a8ae8" stroke-width="0.9" /></g><rect x="486.5" y="3.6" width="9.8" height="10.2" fill="#fafafa" stroke="#e4e4e4" stroke-width="0.3"/><g transform="translate(491.4,8.7)"><path d="M0-3.4L3.2-1.6V2L0 3.6-3.2 2V-1.6z" fill="#fff" stroke="#e03030" stroke-width="0.6" /><path d="M0 .2V3.6" fill="none" stroke="#2040e0" stroke-width="0.7" /><path d="M0 .2L-3.2-1.6" fill="none" stroke="#28a838" stroke-width="0.7" /><path d="M0 .2L3.2-1.6" fill="none" stroke="#e03030" stroke-width="0.7" /></g><rect x="497.70000000000005" y="3.6" width="9.8" height="10.2" fill="#fafafa" stroke="#e4e4e4" stroke-width="0.3"/><g transform="translate(502.6,8.7)"><rect x="-3" y="-3.2" width="2.4" height="2.4" fill="#38a848"/><rect x="0.4" y="-1.2" width="2" height="2" fill="#a8e0a8"/><rect x="-2.6" y="1" width="2" height="2" fill="#a8e0a8"/><path d="M-0.4 -3.4L-0.4 3.6" stroke="#c8c8c8" stroke-width="0.4" fill="none"/></g><rect x="508.9" y="3.6" width="9.8" height="10.2" fill="#cce4f7" stroke="#a8cdee" stroke-width="0.3"/><g transform="translate(513.8,8.7)"><rect x="-3.2" y="-3.2" width="2.8" height="2.8" fill="#38a848"/><rect x="0.4" y="-3.2" width="2.8" height="2.8" fill="#2a6ad8"/><rect x="0.4" y="0.4" width="2.8" height="2.8" fill="#e04848"/><rect x="-3.2" y="0.4" width="2.8" height="2.8" fill="#444"/><circle cx="0" cy="0" r="1.2" fill="#c8a848"/></g><rect x="525.4" y="3.6" width="9.8" height="10.2" fill="#fafafa" stroke="#e4e4e4" stroke-width="0.3"/><g transform="translate(530.3,8.7)"><path d="M-2.8-.4C-2.8-2.4-1.4-3.4.4-3.4S3-2 3-.2 2 1.6 2 3.4H-1.4V2C-2.4 1.6-2.8.8-2.8-.4z" fill="#1c7fd0" /><circle cx="0.6" cy="-0.8" r="1.2" fill="#66b2ee"/></g><rect x="537.1" y="3.6" width="9.8" height="10.2" fill="#fafafa" stroke="#e4e4e4" stroke-width="0.3"/><g transform="translate(542.0,8.7)"><path d="M-3.4 0l3-2 3.8 1.2L.4 1.6z" fill="#1c7fd0" /><path d="M-3.4 0v1.8l3.8 1.6 3-2.4V-.8L.4 1.6z" fill="#0c4a86" /><circle cx="1" cy="-2" r="0.9" fill="#e83030"/></g><rect x="547.6" y="3.6" width="9.8" height="10.2" fill="#fafafa" stroke="#e4e4e4" stroke-width="0.3"/><g transform="translate(552.5,8.7)"><path d="M-3.4.2l3-2.2 3.8 1.2L.4 1.8z" fill="#1c7fd0" /><path d="M-3.4.2v1.8l3.8 1.4 3-2.4V-.8L.4 1.8z" fill="#0c4a86" /><circle cx="1.6" cy="-2.2" r="0.8" fill="#e83030"/></g><rect x="558.8000000000001" y="3.6" width="9.8" height="10.2" fill="#fafafa" stroke="#e4e4e4" stroke-width="0.3"/><g transform="translate(563.7,8.7)"><path d="M-3.4-2.4l5.4-.8 1.4 5.4-5.6.8z" fill="#1c7fd0" /><rect x="-1.2" y="-1.2" width="2.4" height="2.2" fill="#cfe6fa"/></g><rect x="569.6" y="3.6" width="9.8" height="10.2" fill="#fafafa" stroke="#e4e4e4" stroke-width="0.3"/><g transform="translate(574.5,8.7)"><path d="M-3.4-2.6h5l1.6 1.6v3.6h-6.6z" fill="#1c7fd0" /><rect x="-1.6" y="-0.8" width="2.2" height="1.8" fill="#cfe6fa"/><rect x="1" y="-0.4" width="1.4" height="2.4" fill="#0c4a86"/></g><rect x="581.1" y="3.6" width="9.8" height="10.2" fill="#fafafa" stroke="#e4e4e4" stroke-width="0.3"/><g transform="translate(586.0,8.7)"><path d="M-3.2-3l6.4.6v1.8L-3.2-1.2zM-3.2-.2l6.4.6v1.8L-3.2 1.6zM-3.2 2.2l6.4.4v1l-6.4-.4z" fill="#1c7fd0" /></g><rect x="592.3000000000001" y="3.6" width="9.8" height="10.2" fill="#fafafa" stroke="#e4e4e4" stroke-width="0.3"/><g transform="translate(597.2,8.7)"><rect x="-2.8" y="-3.2" width="4" height="5" fill="#f4f8fc" stroke="#6a8aaa" stroke-width="0.4"/><rect x="-0.8" y="-1.6" width="4" height="5" fill="#fff" stroke="#1c6ab8" stroke-width="0.5"/><path d="M.2.2l2 1.8-1 .1.5 1-.6.2-.5-1-.6.6z" fill="#1c7fd0" /></g><rect x="602.9" y="3.6" width="9.8" height="10.2" fill="#fafafa" stroke="#e4e4e4" stroke-width="0.3"/><g transform="translate(607.8,8.7)"><rect x="-3.2" y="-3.2" width="6.4" height="6.4" fill="#fff" stroke="#1c7fd0" stroke-width="0.8"/><rect x="-3.2" y="0" width="3.2" height="3.2" fill="#1c7fd0"/><path d="M.6-.6L2.4-2.4M2.4-2.4h-1.4M2.4-2.4v1.4" fill="none" stroke="#0c4a86" stroke-width="0.6" /></g><rect x="614.0" y="3.6" width="9.8" height="10.2" fill="#fafafa" stroke="#e4e4e4" stroke-width="0.3"/><g transform="translate(618.9,8.7)"><path d="M0-3.6l1.4 1.6h-.8v1.4h1.4v-.8L3.6 0 2 1.4V.6H.6V2h.8L0 3.6-1.4 2h.8V.6H-2v.8L-3.6 0-2-1.4v.8h1.4V-2h-.8z" fill="#1c7fd0" /><circle cx="0" cy="0" r="0.8" fill="#fff"/></g><rect x="625.2" y="3.6" width="9.8" height="10.2" fill="#fafafa" stroke="#e4e4e4" stroke-width="0.3"/><g transform="translate(630.1,8.7)"><path d="M-3.4 3.4l1-2.6L2-3.6l1.6 1.6L-.8 2.4z" fill="#0c4a86" /><path d="M.6-2.2l1.6 1.6L3.6-2 2-3.6z" fill="#1c7fd0" /><circle cx="-2.6" cy="2.6" r="0.9" fill="#3a9ae8"/></g><rect x="636.2" y="3.6" width="9.8" height="10.2" fill="#fafafa" stroke="#e4e4e4" stroke-width="0.3"/><g transform="translate(641.1,8.7)"><rect x="-2.6" y="-2.4" width="5" height="5.4" fill="#d8d8e4" stroke="#9a9aae" stroke-width="0.4"/><path d="M-1.6-3.4l1.2 1.2 1.6-1" fill="none" stroke="#a070d0" stroke-width="0.6" /><circle cx="1.8" cy="-2.6" r="0.7" fill="#c090e0"/><rect x="-1.4" y="-0.6" width="2.6" height="2.2" fill="#b8b8cc"/></g><path d="M1.6 18.4V28.2" stroke="#b8b8b8" stroke-width=".8" stroke-dasharray=".5 .5"/><rect x="4.2" y="17.7" width="10.3" height="10.6" fill="#cce4f7" stroke="#a8cdee" stroke-width=".3"/><rect x="14.5" y="17.7" width="10.2" height="10.6" fill="#d9ebf9" stroke="#a8cdee" stroke-width=".3"/><g transform="translate(9.3,23.0)"><path d="M-1.6-3.4v6l1.4-1.3 1 2.3 1-.4-1-2.3h1.9z" fill="#111" /></g><g transform="translate(19.4,23.0)"><path d="M-3.4.4L.2-3.2l3 3L.4 3.2z" fill="#f0b818" stroke="#222" stroke-width="0.7" /><path d="M-1.6-1.6C-1.6-3.6.8-4 1-2" fill="none" stroke="#222" stroke-width="0.7" /><path d="M3.2 0c.8 1 1 1.8.4 2.4s-1.2-.4-.4-2.4z" fill="#222" /><path d="M-2.4.6L.2-2" fill="none" stroke="#fff" stroke-width="0.5" /></g><g transform="translate(30.0,23.0)"><path d="M-3.6 1L.6-3.4l3 1.6L-.6 3z" fill="#f29aa6" stroke="#d04858" stroke-width="0.5" /><path d="M-3.6 1v1.4L-.6 4V3z" fill="#c85060" /><path d="M-2.2 .4L1.4-2.6" fill="none" stroke="#fbd0d4" stroke-width="0.6" /></g><g transform="translate(40.0,23.0) scale(0.9)"><path d="M-3.4 3.4L-2.6 1 2.2-3.6l1.2 1.2L-1.2 2.4z" fill="#d02828" /><path d="M-3.4 3.4L-2.6 1l1.4 1.4z" fill="#3a2a2a" /><path d="M-1.8 1.6L2.8-3" fill="none" stroke="#7a1010" stroke-width="0.5" /></g><path d="M46.4 23.1h2l-1 1.2z" fill="#333" /><g transform="translate(56.0,23.0)"><path d="M-3.4 2.6L.4-3.2A5.6 5.6 0 0 1 3.6-.4z" fill="#fff" stroke="#e02828" stroke-width="0.6" /><circle cx="-3.4" cy="2.6" r="0.6" fill="#e02828"/><circle cx="0.4" cy="-3.2" r="0.6" fill="#e02828"/><circle cx="3.6" cy="-0.4" r="0.6" fill="#e02828"/></g><path d="M62 23.1h2l-1 1.2z" fill="#333" /><g transform="translate(71.0,23.0)"><rect x="-2.8" y="-3.2" width="5.6" height="6.4" fill="#b4a692" stroke="#8a8a8a" stroke-width="0.5"/><path d="M-2.8 3.2L2.8 -3.2" stroke="#e03030" stroke-width="0.6" fill="none"/></g><path d="M77.3 23.1h2l-1 1.2z" fill="#333" /><g transform="translate(86.2,23.0)"><path d="M-3.8 1.2L0-.6l3.8 1.8L0 3z" fill="#4a4a4a" /><path d="M-3.8 1.2v1L0 4l3.8-1.8v-1L0 3z" fill="#222" /><path d="M0-3.8l1.6 1.8h-1V.8h-1.2v-2.8h-1z" fill="#e02020" /></g><g transform="translate(96.6,23.0)"><path d="M-3.6-1.6C-2.4-3.6.6-3.8 1.6-2.2" fill="none" stroke="#e03030" stroke-width="0.7" /><circle cx="0.8" cy="-0.8" r="1.7" fill="#e02020"/><path d="M.4.4c1.4.4 2.6 1.6 2.8 3.4" fill="none" stroke="#444" stroke-width="0.8" /><path d="M-3.6-1.4l.8 1.6" fill="none" stroke="#888" stroke-width="0.5" /><circle cx="2.6" cy="-2.4" r="0.8" fill="#333"/></g><g transform="translate(106.8,23.0) scale(0.88)"><path d="M0-4l1.5 1.7h-.9v1.7h1.7v-.9L4 0 2.3 1.5V.6H.6v1.7h.9L0 4-1.5 2.3h.9V.6h-1.7v.9L-4 0l1.7-1.5v.9h1.7v-1.7h-.9z" fill="#e02020" /><circle cx="0" cy="0" r="0.7" fill="#fff"/></g><g transform="translate(117.0,23.0) scale(0.85)"><path d="M-3.2.4A3.2 3.2 0 0 1 2.4-2.2" fill="none" stroke="#e02020" stroke-width="1.4" /><path d="M3.2-.4A3.2 3.2 0 0 1-2.4 2.2" fill="none" stroke="#e02020" stroke-width="1.4" /><path d="M1.4-3.8l2.6.8-1.8 2z" fill="#e02020" /><path d="M-1.4 3.8l-2.6-.8 1.8-2z" fill="#e02020" /></g><g transform="translate(127.5,23.0)"><rect x="-3.4" y="-1.8" width="5" height="5.2" fill="#8a8070" stroke="#6a6a6a" stroke-width="0.4"/><rect x="-3.6" y="-3.4" width="7" height="6.8" fill="none" stroke="#f0a0a0" stroke-width="0.4"/><path d="M-.6 .6L2.8-2.8" fill="none" stroke="#e02020" stroke-width="1" /><path d="M3.6-3.6v2.6l-2.6-2.6z" fill="#e02020" /></g><rect x="135.4" y="18.4" width=".4" height="9.600000000000001" fill="#cdcdcd"/><path d="M137.6 18.4V28.2" stroke="#b8b8b8" stroke-width=".8" stroke-dasharray=".5 .5"/><g transform="translate(142.6,23.0)"><circle cx="-0.4" cy="-0.2" r="2.8" fill="none" stroke="#1a1a1a" stroke-width="1"/><path d="M1.6 1.6l1.8 1.8" fill="none" stroke="#e03030" stroke-width="0.8" /><circle cx="2.6" cy="2.8" r="0.7" fill="#7a4a2a"/><path d="M-3.6-1l.8-1.6M2.6-2.8l1-.2" fill="none" stroke="#1a1a1a" stroke-width="0.7" /></g><g transform="translate(152.9,23.0)"><circle cx="0" cy="0" r="2.2" fill="none" stroke="#bcbcbc" stroke-width="0.8"/><path d="M0 -4L0 4" stroke="#c4c4c4" stroke-width="0.6" fill="none"/><path d="M-4 0L4 0" stroke="#c4c4c4" stroke-width="0.6" fill="none"/></g><g transform="translate(163.0,23.0)"><path d="M-.6-3.4L-3.8 3.4h3.2z" fill="#4aa838" /><path d="M.6-3.4l3.2 6.8H.6z" fill="#e8962a" /><path d="M0 -4.4L0 4.4" stroke="#4a4af0" stroke-width="0.8" fill="none"/></g><g transform="translate(173.2,23.0)"><path d="M-3.4-2.6L3.4 3H-3.4z" fill="#a8e0a0" /><rect x="-1" y="-0.6" width="3.6" height="3" fill="#2848e0"/><circle cx="-1.6" cy="-1.8" r="1.2" fill="#e02828"/></g><g transform="translate(184.0,23.0)"><path d="M-3.6-3.2L.4 3.4h-4z" fill="#9ae0b0" /><rect x="0.6" y="-3.4" width="1.8" height="6.8" fill="#1c4ae0"/></g><g transform="translate(193.8,23.0)"><path d="M-2-3.4l1 1.6h-.6V3h-.8V-1.8H-3zM2-3.4l1 1.6h-.6V3h-.8V-1.8H1z" fill="#d82020" /><rect x="-2.6" y="-0.6" width="1.2" height="2.4" fill="#e86060"/><rect x="1.4" y="-0.6" width="1.2" height="2.4" fill="#e86060"/></g><g transform="translate(204.0,23.0)"><path d="M-3.2-3.2L3.4 3.2" fill="none" stroke="#1c4ae0" stroke-width="1.5" /><path d="M-1 2.8l3.6-.4" fill="none" stroke="#58c058" stroke-width="0.9" /><path d="M-3 -1l.4-2" fill="none" stroke="#58c058" stroke-width="0.7" /></g><g transform="translate(214.2,23.0)"><path d="M-3-3L3 3M3-3L-3 3" fill="none" stroke="#1c4ae0" stroke-width="1.4" /><path d="M-3.4-1.6v3.2M3.4-1.6v3.2" fill="none" stroke="#58c058" stroke-width="1" /></g><g transform="translate(224.0,23.0)"><path d="M-2.6-3.4v6.8l2-1.4v-4z" fill="#d83030" /><path d="M.4-2.6C2.4-2.6 3.4-1 3.4.4S2.4 3 .4 3z" fill="#d8d8e0" stroke="#b0b0b8" stroke-width="0.4" /></g><g transform="translate(235.3,23.0)"><path d="M-2.6-2.6C.6-3.8 3.2-2 2.6.6 2 2.8-.6 3.2-1.6 1.8" fill="none" stroke="#9a1818" stroke-width="1.3" /><path d="M-3.6-1.4l2.2-.4-.6-2z" fill="#c02020" /></g><g transform="translate(245.8,23.0)"><path d="M-3.8 3.4C-3.8-.6-1-3.4 3.8-3.4v2.6C.4-.8-1.2.6-1.2 3.4z" fill="#c8c8c8" stroke="#6a6a6a" stroke-width="0.5" /><path d="M-2.6 3.2C-2.4 0 0-2 3.6-2.2" fill="none" stroke="#e04040" stroke-width="0.5" /></g><g transform="translate(255.7,23.0)"><rect x="-4.4" y="-4.2" width="8.8" height="8.4" fill="#3a3a3a" stroke="#666" stroke-width="0.5" rx="1"/><rect x="-3.5" y="-3.2" width="7" height="6.2" fill="#c81c1c"/><rect x="-2.4" y="-2.2" width="2.2" height="2" fill="#3a2020"/><rect x="0.6" y="0.4" width="2.2" height="2" fill="#3a2020"/><rect x="0.6" y="-2.2" width="2.2" height="1.6" fill="#e85050"/><rect x="-2.4" y="0.8" width="2.2" height="1.6" fill="#e85050"/></g><g transform="translate(266.2,23.0)"><rect x="-3.4" y="-3.6" width="6.8" height="7.2" fill="#fbd8d8" stroke="#f08080" stroke-width="0.5"/><path d="M-1.2-2.2h2.2v2.4l1.2 2.4h-4.6l1.2-2.4z" fill="#2a2a2a" /><path d="M-2.6 3.6L3.6 2.6" stroke="#f08080" stroke-width="0.4" fill="none"/></g><g transform="translate(276.3,23.0)"><circle cx="-1.8" cy="0" r="2.3" fill="#0a0a0a"/><circle cx="1.8" cy="0" r="2.3" fill="#0a0a0a"/><rect x="-1.8" y="-1.5" width="3.6" height="3" fill="#0a0a0a"/></g><g transform="translate(286.8,23.0)"><circle cx="-1.9" cy="0" r="2.3" fill="#0a0a0a"/><circle cx="1.9" cy="0" r="2.3" fill="#0a0a0a"/><ellipse cx="0" cy="0" rx="0.6" ry="1.9" fill="#f0f0f0"/></g><g transform="translate(297.0,23.0)"><circle cx="0" cy="0" r="4.3" fill="#fff" stroke="#222" stroke-width="0.5"/><circle cx="0" cy="-1.6" r="1.75" fill="#0a0a0a"/><circle cx="-1.6" cy="1.1" r="1.75" fill="#0a0a0a"/><circle cx="1.6" cy="1.1" r="1.75" fill="#0a0a0a"/><circle cx="0" cy="0" r="1.2" fill="#0a0a0a"/></g><g transform="translate(307.5,23.0)"><circle cx="0" cy="0" r="4.1" fill="#fff" stroke="#0a0a0a" stroke-width="1.1"/><circle cx="0" cy="0" r="2.6" fill="none" stroke="#0a0a0a" stroke-width="0.5"/><text x="-1.5" y="1.6" font-size="4.4" fill="#d02020" font-family="Liberation Sans,sans-serif" font-weight="bold">A</text></g><g transform="translate(317.4,23.0)"><path d="M-3.4-1.6L-.6-3.4 3.4-2.2V2L.6 3.8-3.4 2.4z" fill="#3f9a2e" /><path d="M-3.4-1.6L.6-.2V3.8" fill="none" stroke="#2a6a1e" stroke-width="0.5" /><path d="M.6-.2L3.4-2.2" fill="none" stroke="#2a6a1e" stroke-width="0.5" /><circle cx="-1.6" cy="0.6" r="0.9" fill="#58b848"/></g><g transform="translate(327.9,23.0)"><path d="M0-3.2l1 2.2 2.6.2-2 1.6.8 2.6L0 2 -2.4 3.4l.8-2.6-2-1.6 2.6-.2z" fill="#2e7a2e" /><circle cx="0" cy="0.2" r="1.2" fill="#333"/><path d="M-3.6 0.4L3.6 0.4" stroke="#4a8a4a" stroke-width="0.4" fill="none"/></g><g transform="translate(337.8,23.0) scale(0.9)"><path d="M-3.4-1.6L0-2.8l3.4 1.2L0-.2z" fill="#f0e4c4" stroke="#8a7a5a" stroke-width="0.4" /><path d="M-3.4-1.6L0-.2v3.2L-3.4 1.6z" fill="#5a7ae0" /><path d="M3.4-1.6L0-.2v3.2L3.4 1.6z" fill="#e06868" /><path d="M-3.4-1.6L0-.2 3.4-1.6" fill="none" stroke="#fff" stroke-width="0.6" /><path d="M-3.8-2.8L-1.2-3.6M3.8-2.8L1.2-3.6" fill="none" stroke="#c8a060" stroke-width="0.8" /></g><g transform="translate(348.3,23.0) scale(0.9)"><path d="M-3.4-1.6L0-2.8l3.4 1.2L0-.2z" fill="#f0e4c4" stroke="#8a7a5a" stroke-width="0.4" /><path d="M-3.4-1.6L0-.2v3.2L-3.4 1.6z" fill="#4a5ad0" /><path d="M3.4-1.6L0-.2v3.2L3.4 1.6z" fill="#d85858" /><path d="M-3.4-1.6L0-.2 3.4-1.6" fill="none" stroke="#fff" stroke-width="0.6" /><circle cx="1.8" cy="1.8" r="1.3" fill="#8a8a9a"/><path d="M-3.8-2.8l2.4-.8M3.8-2.8L1.2-3.6" fill="none" stroke="#c8a060" stroke-width="0.8" /></g><g transform="translate(358.2,23.0)"><path d="M-.4-3.4l1 2.4 3 .4-2.4 1.4.6 2.8-2.2-1.6-2.4 1.4.8-2.6-1.8-1.6 2.6-.2z" fill="#8a7a6a" /><path d="M0.4 0.4L4 1" stroke="#8a8a8a" stroke-width="0.5" fill="none"/></g><g transform="translate(369.0,23.0)"><path d="M0-3.4C1.2-2.6 2.4-2.4 3.2-2.4 3.2.8 2 2.6 0 3.6-2 2.6-3.2.8-3.2-2.4-2.4-2.4-1.2-2.6 0-3.4z" fill="#f4f4f4" stroke="#8a8a8a" stroke-width="0.7" /><path d="M-5 0L-3.6 0" stroke="#444" stroke-width="0.6" fill="none"/></g><g transform="translate(379.0,23.0)"><path d="M-2.8 1.4C-2.8-4.4 2.8-4.4 2.8 1.4" fill="none" stroke="#e85050" stroke-width="0.6" /><circle cx="-2.6" cy="1.8" r="1.3" fill="#3a9a3a"/><circle cx="2.6" cy="2.2" r="1.2" fill="#e8b020"/><circle cx="2.6" cy="2.2" r="1.2" fill="none" stroke="#7a5a10" stroke-width="0.3"/></g><g transform="translate(389.6,23.0)"><path d="M0-3.6L3.6 2.8H-3.6z" fill="none" stroke="#48a848" stroke-width="0.7" /><path d="M-1.6 2.6C-2.6.6-.8-1.4.8-.6s1.6 2.6.2 3.2" fill="none" stroke="#48a848" stroke-width="0.6" /><path d="M-1-.6L.6-2.4" fill="none" stroke="#48a848" stroke-width="0.5" /></g><g transform="translate(400.1,23.0)"><path d="M-3.6-.4C-2.4-3.4-.6-3.4 0-.4S2.4 2.6 3.6-.4" fill="none" stroke="#e03030" stroke-width="0.8" /><path d="M-3.6.8C-2.4 3-.6 3 0 .8" fill="none" stroke="#2848e0" stroke-width="0.7" /><path d="M0-.2C.6-2.6 2.4-2.6 3.6-.6" fill="none" stroke="#2848e0" stroke-width="0.6" /></g><g transform="translate(410.7,23.0)"><path d="M-1 3.2C-3.6 2-3.6-2-.6-3" fill="none" stroke="#e03030" stroke-width="1" /><path d="M-.6-3C2.4-3.8 4-1 2.6 1" fill="none" stroke="#30a040" stroke-width="1" /><path d="M2.6 1C1.6 2.6 0 2.4-.4.8" fill="none" stroke="#2848e0" stroke-width="1" /><circle cx="-1" cy="3.2" r="0.7" fill="#8a4ad0"/></g><g transform="translate(420.5,23.0)"><path d="M-1.4 3.2C-3.8 1.6-3.4-2.2-.4-3S4-1.2 2.8.8.2 2.2-.2.6" fill="none" stroke="#e0a818" stroke-width="1.1" /><path d="M-1.4 3.2C-3.8 1.6-3.4-2.2-.4-3" fill="none" stroke="#b87a10" stroke-width="0.4" /></g><g transform="translate(430.4,23.0)"><path d="M-3.6 2.6C-2-2.4 2-2.4 3.6 2.6" fill="none" stroke="#3a5ad8" stroke-width="0.7" /><path d="M-3.4-2.8L-.8 0M3.4-2.8L.8 0" fill="none" stroke="#d84848" stroke-width="0.6" /><path d="M-2 1.4l4 0" fill="none" stroke="#9ab0e8" stroke-width="0.4" /></g><g transform="translate(440.9,23.0)"><path d="M-3.4 2.8L-1-2.6 1 2.4 3.4-2.8" fill="none" stroke="#3a5ad8" stroke-width="0.7" /><path d="M-3.6 3.2l1-.8M2.6-2l1.2-1.2" fill="none" stroke="#e03030" stroke-width="0.7" /></g><g transform="translate(450.8,23.0)"><path d="M-3 3.2C-3.4-1.2-.6-3.4 3.4-3" fill="none" stroke="#38a838" stroke-width="0.9" /><path d="M3.4-3l-.6 1.6" fill="none" stroke="#e03030" stroke-width="0.8" /><path d="M-3 3.2v-1.4" fill="none" stroke="#e03030" stroke-width="0.7" /></g><g transform="translate(461.8,23.0)"><path d="M-3 3.2C-3.4-1.2-.6-3.4 3.4-3" fill="none" stroke="#e04040" stroke-width="0.9" /><circle cx="3.4" cy="-3" r="0.5" fill="#e04040"/></g><g transform="translate(471.7,23.0) scale(0.9)"><path d="M-3.6.6C-2.6-1.4-.6-1.2.6-.2L3-3.2l.8.6-1.6 5.4C.6 4-2.8 3.2-3.6.6z" fill="#4a4038" /><circle cx="-1" cy="1" r="1.2" fill="#9a8a78"/><path d="M0.8 0.4L3.2 -2.8" stroke="#8a6a4a" stroke-width="0.6" fill="none"/></g><g transform="translate(482.2,23.0) scale(0.9)"><path d="M-3.4 3.4C-3 1 -1.4.4-.2 1.2L2.4-3.6l1.2.8-2 5.4C.4 3.8-1.8 3.8-3.4 3.4z" fill="#4a3a30" /><path d="M0.4 1L2.8 -3" stroke="#a0522d" stroke-width="0.8" fill="none"/></g><g transform="translate(492.1,23.0)"><path d="M-2.8-3L3 3.2" fill="none" stroke="#2a2a2a" stroke-width="0.8" /><path d="M3-3L-3 3.2" fill="none" stroke="#d82020" stroke-width="0.9" /><path d="M-3.4-1.4l1.2-.4" fill="none" stroke="#d82020" stroke-width="0.6" /></g><g transform="translate(503.3,23.0) scale(0.8)"><path d="M-2.8-2.8L3 3" fill="none" stroke="#2a2a2a" stroke-width="0.7" /><path d="M3-2.8L-3 3" fill="none" stroke="#d82020" stroke-width="0.9" /><path d="M-2.6 3.4L2.6 3.4" stroke="#888" stroke-width="0.4" fill="none"/></g><g transform="translate(513.8,23.0) scale(0.82)"><rect x="-2.8" y="-2.8" width="5.6" height="5.6" fill="#fff" stroke="#2a2a2a" stroke-width="0.7"/><path d="M-2.4 2.4L2.4 -2.4" stroke="#d82020" stroke-width="0.9" fill="none"/></g><g transform="translate(523.0,23.0) scale(0.85)"><path d="M-2.6-1C-2.6-3.2 2.8-3.2 2.8-.6 2.8 1.8.6 3.2-1.2 2.8S-2.6.6-2.6-1z" fill="#fff" stroke="#333" stroke-width="0.6" /><path d="M-2 2.4L2.4 -2.4" stroke="#d82020" stroke-width="0.9" fill="none"/></g><g transform="translate(533.6,23.0) scale(0.88)"><circle cx="0" cy="0" r="3.3" fill="#fff" stroke="#e03030" stroke-width="0.7"/><path d="M-2.6 2.6L2.6 -2.6" stroke="#d82020" stroke-width="1" fill="none"/><path d="M-1.8 3.2L3.2 -1.8" stroke="#e88080" stroke-width="0.4" fill="none"/></g><g transform="translate(543.4,23.0) scale(0.9)"><path d="M-3.2 3.4V-.4C-3.2-2.2-2-3.2-.2-3.2H3.4" fill="none" stroke="#a8a8a8" stroke-width="0.9" /><path d="M-3.2 3.4V1.4" fill="none" stroke="#e04040" stroke-width="0.8" /><path d="M3.4-3.2H2" fill="none" stroke="#e04040" stroke-width="0.6" /></g><g transform="translate(553.8,23.0) scale(0.85)"><path d="M-1.6-3A3.3 3.3 0 1 0 3.2.8" fill="none" stroke="#333" stroke-width="0.7" /><circle cx="1.2" cy="0.4" r="0.9" fill="#e02020"/></g><g transform="translate(564.3,23.0) scale(0.8)"><path d="M-3.4 3.4L-2.6 1 2.2-3.6l1.2 1.2L-1.2 2.4z" fill="#e03020" /><path d="M-3.4 3.4L-2.6 1l1.4 1.4z" fill="#f0d040" /><path d="M2.2-3.6l1.2 1.2.6-.6-1.2-1.2z" fill="#f0d040" /></g><g transform="translate(574.9,23.0) scale(0.85)"><path d="M-3.8-.4L0-2.8 3.8-.4 0 2z" fill="#4a4a4a" /><path d="M-3.8.8L0 3.2 3.8.8 0 2z" fill="#6a6a6a" /><path d="M-3.8-.4v1.2M3.8-.4v1.2" fill="none" stroke="#4a4a4a" stroke-width="0.5" /></g><g transform="translate(585.4,23.0)"><path d="M-3.8 0L0-2.8 3.8 0 0 2.8z" fill="#e4e8f0" stroke="#9aa4b4" stroke-width="0.5" /><path d="M-1.2.2L.2-.8 1.4.2.2 1z" fill="#5a8ad8" /></g><g transform="translate(595.3,23.0)"><rect x="-4" y="-4.4" width="5" height="6.6" fill="#fff" stroke="#e85050" stroke-width="0.5"/><ellipse cx="0.8" cy="0.8" rx="2.6" ry="3" fill="#3a2a22"/><circle cx="0.8" cy="-0.4" r="1.2" fill="#c8a888"/><circle cx="-0.6" cy="1.6" r="0.8" fill="#d83030"/><circle cx="2" cy="2.2" r="0.7" fill="#e8e8e8"/></g><g transform="translate(605.1,23.0) scale(0.9)"><rect x="-3.4" y="-1.4" width="4.6" height="4.6" fill="#2a2a2a"/><path d="M-1.1 -1.4L-1.1 3.2" stroke="#888" stroke-width="0.4" fill="none"/><path d="M-3.4 0.9L1.2 0.9" stroke="#888" stroke-width="0.4" fill="none"/><text x="1.2" y="-0.4" font-size="4" fill="#e02020" font-family="Liberation Sans,sans-serif" font-weight="bold">2</text></g><g transform="translate(615.7,23.0) scale(0.95)"><rect x="-3.6" y="-0.6" width="5.4" height="3.8" fill="#f0f020"/><text x="1.4" y="-0.6" font-size="4" fill="#e02020" font-family="Liberation Sans,sans-serif" font-weight="bold">2</text></g><g transform="translate(626.2,23.0) scale(0.85)"><rect x="-2.2" y="-3.2" width="4.4" height="6.4" fill="#9a5a2a" stroke="#5a3010" stroke-width="0.4" rx="1.4"/><path d="M-2.2 -1.2L2.2 -1.2" stroke="#4a2a10" stroke-width="0.5" fill="none"/><path d="M-2.2 1.2L2.2 1.2" stroke="#4a2a10" stroke-width="0.5" fill="none"/><path d="M-0.6 -3L-0.6 3" stroke="#c88a4a" stroke-width="0.6" fill="none"/></g><g transform="translate(636.0,23.0)"><rect x="-3.2" y="-3.2" width="4.6" height="3.4" fill="#3a7ad8"/><rect x="-0.6" y="-0.2" width="4" height="3.2" fill="#f8f8f8" stroke="#9ab0d0" stroke-width="0.4"/></g><g transform="translate(646.8,23.0)"><rect x="-3.4" y="-3.2" width="3.6" height="4.4" fill="#fff" stroke="#8aa0c0" stroke-width="0.4"/><rect x="-0.4" y="-0.6" width="3.6" height="4.2" fill="#3a7ad8" stroke="#fff" stroke-width="0.3"/><rect x="0.4" y="0.2" width="2" height="1" fill="#fff"/></g><g transform="translate(656.5,23.0)"><rect x="-3.2" y="-3.2" width="3.6" height="4" fill="#fff" stroke="#aaa" stroke-width="0.4"/><path d="M-2.6 .4h6v3h-6z" fill="#f0c840" /><circle cx="-0.4" cy="-0.4" r="0.9" fill="#333"/></g><g transform="translate(667.3,23.0)"><defs><linearGradient id="rb" x1="0" y1="1" x2="1" y2="0"><stop offset="0" stop-color="#e02020"/><stop offset=".25" stop-color="#f0e020"/><stop offset=".5" stop-color="#20d040"/><stop offset=".75" stop-color="#20b0f0"/><stop offset="1" stop-color="#4020e0"/></linearGradient></defs><rect x="-3.4" y="-3.4" width="6.8" height="6.8" fill="url(#rb)"/></g><g transform="translate(677.9,23.0)"><path d="M-1.6-3.8C.2-4.4 1-3 .2-2S-.4.2 1 .4s3-.6 3.4-.2c-.4 2.4-2 3.4-4.4 3.4S-3.8 2.6-3.8.8-2-.8-1.4-1.8-2.6-3.2-1.6-3.8z" fill="#9a3ab8" /><path d="M-3.8 2.8H4.2" fill="none" stroke="#c88ae0" stroke-width="0.7" /></g><g transform="translate(688.2,23.0)"><path d="M-4-.4C-2.4-2.8 2.4-2.8 4-.4 2.6-.6 1 1 .6 3-1 1.4-2.6 0-4-.4z" fill="#5a5a5a" stroke="#1a1a1a" stroke-width="0.6" /><path d="M-2.4-1.4L.6 2M0-2L2 .6M-3-.6L2.6-1.6" fill="none" stroke="#bcbcbc" stroke-width="0.35" /></g><g transform="translate(698.8,23.0)"><path d="M3.6-3.8L-1.6 1.2-.4 2.4z" fill="#0a0a0a" /><path d="M-1.6 1.2l-1.2 2.4 2.4-1.2z" fill="#333" /><path d="M1 2h3l-1.5 1.8z" fill="#0a0a0a" /></g><g transform="translate(709.0,23.0)"><path d="M3.6-3.8L-1.6 1.2-.4 2.4z" fill="#2a48e0" /><path d="M-1.6 1.2l-1.2 2.4 2.4-1.2z" fill="#1a2a8a" /><path d="M1.4 1.4h2.2v2.2H1.4z" fill="none" stroke="#2a48e0" stroke-width="0.5" /></g><g transform="translate(719.0,23.0)"><path d="M-3.4 3.4C-3.4-4.4 3.4-4.4 3.4 3.4" fill="none" stroke="#2a48e0" stroke-width="0.9" /><circle cx="-3" cy="-2.4" r="0.7" fill="#e02020"/><circle cx="0" cy="-3.6" r="0.7" fill="#e02020"/><circle cx="3" cy="-2.4" r="0.7" fill="#e02020"/><path d="M-3-2.4L0-3.6 3-2.4" fill="none" stroke="#e86060" stroke-width="0.4" /></g><g transform="translate(728.9,23.0)"><path d="M-3.4-3L2.4 0-3.4 3" fill="none" stroke="#1a1a1a" stroke-width="0.9" /><circle cx="3" cy="0" r="1.1" fill="#f02020"/><path d="M1.8 0h2.8" fill="none" stroke="#f02020" stroke-width="0.6" /></g><g transform="translate(739.5,23.0)"><path d="M-3 3.4V-1.6C-3-4-.4-4-.2-1.6L.2 1.6C.4 4 3 4 3 1.6V-3.4" fill="none" stroke="#28b838" stroke-width="1.1" /></g><g transform="translate(749.7,23.0)"><path d="M-3.2 3.4C-3.2-1.2-.6-3.4 3.4-3.4" fill="none" stroke="#28b838" stroke-width="1" /><circle cx="-3.2" cy="3.4" r="0.7" fill="#e02020"/><circle cx="3.4" cy="-3.4" r="0.7" fill="#e02020"/><circle cx="-1.6" cy="-1.4" r="0.6" fill="#e02020"/></g><path d="M1.6 30.6V40.2" stroke="#b8b8b8" stroke-width=".8" stroke-dasharray=".5 .5"/><path d="M120 30.6V40.2" stroke="#b8b8b8" stroke-width=".8" stroke-dasharray=".5 .5"/><rect x="121.6" y="30.2" width="10.5" height="10.2" fill="#cce4f7" stroke="#a8cdee" stroke-width=".3"/><text x="123.2" y="37" font-size="4.6" fill="#1c3c6c" font-family="Liberation Sans,sans-serif" textLength="7.4" lengthAdjust="spacingAndGlyphs">Cm</text><text x="134.2" y="36.8" font-size="3.8" fill="#333" font-family="Liberation Sans,sans-serif" font-weight="bold" textLength="4" lengthAdjust="spacingAndGlyphs">IN</text><g transform="translate(147.2,35.2)"><path d="M-3.6 3.6L-1 1" fill="none" stroke="#222" stroke-width="0.9" /><circle cx="0.8" cy="-0.8" r="2.5" fill="#e8b818" stroke="#222" stroke-width="0.8"/><circle cx="0.8" cy="-0.8" r="0.9" fill="#fff8d0"/></g><g transform="translate(157.4,35.2)"><path d="M-3-2.8L2.6 2.8M-3.4-.6l2.6-2.6M.4 3.2L3 .6" fill="none" stroke="#333" stroke-width="0.6" /><path d="M-.6-.6l3-2.4" fill="none" stroke="#48a848" stroke-width="0.7" /><circle cx="2.4" cy="-3" r="0.5" fill="#48a848"/></g><g transform="translate(167.6,35.2)"><path d="M-3.6 2.6C-3.6-1.8-.4-3.6 3.6-3L2.8 2.6z" fill="#d8a858" stroke="#6a4010" stroke-width="0.7" /><path d="M-1.6 1.6C-1.6-.4-.2-1.2 1.8-1L1.4 1.6z" fill="#f0f0f0" stroke="#6a4010" stroke-width="0.4" /></g><g transform="translate(177.9,35.2)"><path d="M0-3.4L3.8 0 0 3.4-3.8 0z" fill="#b8b8b8" stroke="#777" stroke-width="0.4" /><path d="M0 -3.4L0 3.4" stroke="#6a6a6a" stroke-width="0.6" fill="none"/><path d="M-3.8 0L3.8 0" stroke="#6a6a6a" stroke-width="0.6" fill="none"/></g><rect x="183.6" y="30.2" width="20.6" height="10.2" fill="#cce4f7" stroke="#a8cdee" stroke-width=".3"/><rect x="193.9" y="30.2" width=".4" height="10.2" fill="#cdcdcd"/><g transform="translate(189.0,35.2)"><g transform="scale(.88)"><path d="M-3.4-1.8L0-3.6 3.4-1.8 0 0z" fill="#8ab8e8" stroke="#5a6a7a" stroke-width="0.35" /><path d="M-3.4-1.8L0 0v3.8L-3.4 2z" fill="#2a78c8" stroke="#5a6a7a" stroke-width="0.35" /><path d="M3.4-1.8L0 0v3.8L3.4 2z" fill="#1a58a0" stroke="#5a6a7a" stroke-width="0.35" /></g><circle cx="-1.4" cy="1" r="1" fill="#bcd8f4"/></g><g transform="translate(199.6,35.2)"><g transform="scale(.88)"><path d="M-3.4-1.8L0-3.6 3.4-1.8 0 0z" fill="#6aa8e0" stroke="#5a6a7a" stroke-width="0.35" /><path d="M-3.4-1.8L0 0v3.8L-3.4 2z" fill="#2a78c8" stroke="#5a6a7a" stroke-width="0.35" /><path d="M3.4-1.8L0 0v3.8L3.4 2z" fill="#1a58a0" stroke="#5a6a7a" stroke-width="0.35" /></g><circle cx="0.2" cy="0.4" r="1.3" fill="#1a3a6a"/><circle cx="0.2" cy="0.4" r="0.6" fill="#8ac0f0"/></g><g transform="translate(209.2,35.2)"><g transform="scale(.88)"><path d="M-3.4-1.8L0-3.6 3.4-1.8 0 0z" fill="#4aa0e0" stroke="#4a5a6a" stroke-width="0.35" /><path d="M-3.4-1.8L0 0v3.8L-3.4 2z" fill="#1a88d8" stroke="#4a5a6a" stroke-width="0.35" /><path d="M3.4-1.8L0 0v3.8L3.4 2z" fill="#1a58a0" stroke="#4a5a6a" stroke-width="0.35" /></g><circle cx="-1.2" cy="0.4" r="1" fill="#0a3a7a"/></g><g transform="translate(219.5,35.2)"><g transform="scale(.88)"><path d="M-3.4-1.8L0-3.6 3.4-1.8 0 0z" fill="#c8c8c8" stroke="#444" stroke-width="0.35" /><path d="M-3.4-1.8L0 0v3.8L-3.4 2z" fill="#8a8a8a" stroke="#444" stroke-width="0.35" /><path d="M3.4-1.8L0 0v3.8L3.4 2z" fill="#6a6a6a" stroke="#444" stroke-width="0.35" /></g><path d="M-4-1L-1.6-3.4M4-.6l-2 2" fill="none" stroke="#333" stroke-width="0.6" /><circle cx="1.6" cy="-2.6" r="1" fill="#e8e8e8" stroke="#555" stroke-width="0.4"/></g><g transform="translate(229.7,35.2)"><path d="M-3.8.2L0-3.4 3.8.2M-2.6-.6V3.4h5.2V-.6" fill="#fff" stroke="#111" stroke-width="0.9" /></g><g transform="translate(239.9,35.2)"><rect x="-2.6" y="-3.4" width="5.2" height="6.8" fill="#a89a84" stroke="#7a7a7a" stroke-width="0.5"/><rect x="-1.4" y="-2.4" width="2.8" height="3" fill="#c4b8a4"/><path d="M1.8 -3.4L1.8 3.4" stroke="#8a7a6a" stroke-width="0.5" fill="none"/></g><g transform="translate(249.7,35.2)"><path d="M-2.6-.4V3.4h5.2V-.4L0-2.8z" fill="#fff" stroke="#111" stroke-width="0.9" /><path d="M-4 .4L0-3.4 4 .4" fill="none" stroke="#111" stroke-width="1.3" /><rect x="-1" y="0.8" width="2" height="2.6" fill="#1a1a1a"/></g><g transform="translate(260.3,35.2)"><path d="M-3.6-1.2h7.2v4.6h-7.2z" fill="#fafafa" stroke="#5a5a5a" stroke-width="0.6" /><path d="M-3.6-1.2L-2.4-3h4.8l1.2 1.8" fill="#b8b0a8" stroke="#5a5a5a" stroke-width="0.6" /><path d="M-3.6 0.6L3.6 0.6" stroke="#6a6a6a" stroke-width="0.5" fill="none"/><path d="M-1.2 -1.2L-1.2 3.4" stroke="#9a9a9a" stroke-width="0.4" fill="none"/><path d="M1.2 -1.2L1.2 3.4" stroke="#9a9a9a" stroke-width="0.4" fill="none"/><circle cx="0.6" cy="-3.4" r="0.9" fill="#e8e8e8" stroke="#666" stroke-width="0.4"/></g><g transform="translate(270.8,35.2)"><path d="M-3.6-1.2h7.2v4.6h-7.2z" fill="#fafafa" stroke="#5a5a5a" stroke-width="0.6" /><path d="M-3.6-1.2L-2.4-3h4.8l1.2 1.8" fill="#a89888" stroke="#5a5a5a" stroke-width="0.6" /><path d="M-3.6 0.6L3.6 0.6" stroke="#6a6a6a" stroke-width="0.5" fill="none"/><path d="M-1.2 -1.2L-1.2 3.4" stroke="#9a9a9a" stroke-width="0.4" fill="none"/><path d="M1.2 -1.2L1.2 3.4" stroke="#9a9a9a" stroke-width="0.4" fill="none"/></g><g transform="translate(281.2,35.2)"><rect x="-3" y="-3" width="6" height="6" fill="#fff" stroke="#2a2018" stroke-width="1" rx="0.8"/></g><g transform="translate(291.0,35.2)"><path d="M0-3.8C1.2-2.4 1.2.4 1 1.6h-2C-1.2.4-1.2-2.4 0-3.8z" fill="#d8d8d8" stroke="#8a8a8a" stroke-width="0.4" /><path d="M-1 1l-1.2 2h1.2zM1 1l1.2 2H1z" fill="#e03030" /><path d="M-.5 1.8h1l-.5 2z" fill="#f0a020" /></g><g transform="translate(301.6,35.2)"><path d="M-3.6-1.4C-3.6-3.2-.4-3.8 1.2-2.6S2.6.6 1 1.2-3.6.4-3.6-1.4z" fill="#2a88d8" /><path d="M.8.6L3.6 3.6" fill="none" stroke="#2a3a5a" stroke-width="1.2" /><circle cx="-1.4" cy="-1.4" r="0.9" fill="#8ac8f8"/></g><rect x="307.2" y="30.2" width="20.2" height="10.2" fill="#cce4f7" stroke="#a8cdee" stroke-width=".3"/><rect x="317.3" y="30.2" width=".4" height="10.2" fill="#cdcdcd"/><g transform="translate(312.2,35.2)"><rect x="-3" y="-0.2" width="4.6" height="3.6" fill="#c8aa78" stroke="#8a7048" stroke-width="0.4"/><path d="M.6-.2V-3.6" fill="none" stroke="#555" stroke-width="0.5" /><path d="M.6-3.6c1-.6 1.8.4 2.8-.2v2c-1 .6-1.8-.4-2.8.2z" fill="#5a8ad8" /></g><g transform="translate(322.4,35.2)"><g transform="scale(.88)"><path d="M-3.4-1.8L0-3.6 3.4-1.8 0 0z" fill="#ecdcb4" stroke="#9a8458" stroke-width="0.35" /><path d="M-3.4-1.8L0 0v3.8L-3.4 2z" fill="#d4bc88" stroke="#9a8458" stroke-width="0.35" /><path d="M3.4-1.8L0 0v3.8L3.4 2z" fill="#b89c68" stroke="#9a8458" stroke-width="0.35" /></g></g><g transform="translate(332.5,35.2)"><path d="M-2.8-2.4L0-3.4l2.8 1L2 3 0 3.8-2 3z" fill="#d8c8a4" stroke="#8a8070" stroke-width="0.5" /><path d="M-2.8-2.4L0-1.4l2.8-1" fill="none" stroke="#8a8070" stroke-width="0.5" /><path d="M0 -1.4L0 3.8" stroke="#a89878" stroke-width="0.4" fill="none"/></g><rect x="337.8" y="30.2" width="10.0" height="10.2" fill="#cce4f7" stroke="#a8cdee" stroke-width=".3"/><g transform="translate(342.8,35.2)"><g transform="translate(-1.0,1.0) scale(0.75)"><g transform="scale(.88)"><path d="M-3.4-1.8L0-3.6 3.4-1.8 0 0z" fill="#e4d0a4" stroke="#8a7448" stroke-width="0.35" /><path d="M-3.4-1.8L0 0v3.8L-3.4 2z" fill="#c8ac78" stroke="#8a7448" stroke-width="0.35" /><path d="M3.4-1.8L0 0v3.8L3.4 2z" fill="#a88c58" stroke="#8a7448" stroke-width="0.35" /></g></g><circle cx="1.6" cy="-2.2" r="1.7" fill="#f8f8f8" stroke="#555" stroke-width="0.5"/><ellipse cx="1.6" cy="-3" rx="1.7" ry="0.7" fill="#e0e0e0" stroke="#555" stroke-width="0.4"/><circle cx="2.4" cy="2.2" r="1.4" fill="#fff" stroke="#999" stroke-width="0.3"/></g><g transform="translate(354.2,35.2)"><circle cx="-2.2" cy="2" r="1.7" fill="#fff" stroke="#888" stroke-width="0.4"/><circle cx="1.4" cy="2.4" r="1.5" fill="#fff" stroke="#888" stroke-width="0.4"/><circle cx="0.6" cy="-1.8" r="2" fill="#fbfbfb" stroke="#333" stroke-width="0.6"/><ellipse cx="0.6" cy="-2.8" rx="2" ry="0.8" fill="#ddd" stroke="#333" stroke-width="0.5"/><path d="M-3.6-.6l2-1.4M3.4-.4l-1-1" fill="none" stroke="#333" stroke-width="0.5" /></g><g transform="translate(363.5,35.2)"><g transform="scale(.88)"><path d="M-3.4-1.8L0-3.6 3.4-1.8 0 0z" fill="#f0e8e0" stroke="#aaa" stroke-width="0.35" /><path d="M-3.4-1.8L0 0v3.8L-3.4 2z" fill="#e8f0e8" stroke="#aaa" stroke-width="0.35" /><path d="M3.4-1.8L0 0v3.8L3.4 2z" fill="#e0e8f4" stroke="#aaa" stroke-width="0.35" /></g><path d="M-1.7-2.7L1.7-.9M1.7-2.7L-1.7-.9" fill="none" stroke="#e8a050" stroke-width="0.5" /><path d="M-1.7 -.9v3.8" fill="none" stroke="#58b858" stroke-width="0.6" /><path d="M1.7-.9v3.8" fill="none" stroke="#5a8ae0" stroke-width="0.6" /><path d="M-3.4 0L0 1.9 3.4 0" fill="none" stroke="#e86060" stroke-width="0.5" /></g><g transform="translate(373.6,35.2)"><g transform="scale(.88)"><path d="M-3.4-1.8L0-3.6 3.4-1.8 0 0z" fill="#5a6a8a" stroke="#223" stroke-width="0.35" /><path d="M-3.4-1.8L0 0v3.8L-3.4 2z" fill="#3a4864" stroke="#223" stroke-width="0.35" /><path d="M3.4-1.8L0 0v3.8L3.4 2z" fill="#4a5a7a" stroke="#223" stroke-width="0.35" /></g><path d="M-1.7-2.7L1.7-.9M1.7-2.7L-1.7-.9" fill="none" stroke="#8a9ab8" stroke-width="0.4" /><path d="M-3.4 0L0 1.9 3.4 0" fill="none" stroke="#8a9ab8" stroke-width="0.4" /></g><g transform="translate(383.7,35.2)"><g transform="scale(.88)"><path d="M-3.4-1.8L0-3.6 3.4-1.8 0 0z" fill="#fdfdfd" stroke="#8a8a8a" stroke-width="0.5" /><path d="M-3.4-1.8L0 0v3.8L-3.4 2z" fill="#f4f4f4" stroke="#8a8a8a" stroke-width="0.5" /><path d="M3.4-1.8L0 0v3.8L3.4 2z" fill="#ededed" stroke="#8a8a8a" stroke-width="0.5" /></g><circle cx="0" cy="0.4" r="0.8" fill="none" stroke="#aaa" stroke-width="0.4"/></g><g transform="translate(394.0,35.2)"><g transform="scale(.88)"><path d="M-3.4-1.8L0-3.6 3.4-1.8 0 0z" fill="#fff" stroke="#c0c0c0" stroke-width="0.5" /><path d="M-3.4-1.8L0 0v3.8L-3.4 2z" fill="#fafafa" stroke="#c0c0c0" stroke-width="0.5" /><path d="M3.4-1.8L0 0v3.8L3.4 2z" fill="#f6f6f6" stroke="#c0c0c0" stroke-width="0.5" /></g><circle cx="0" cy="0.4" r="0.8" fill="none" stroke="#ccc" stroke-width="0.4"/></g><g transform="translate(404.5,35.2)"><g transform="scale(.88)"><path d="M-3.4-1.8L0-3.6 3.4-1.8 0 0z" fill="#d8c4a0" stroke="#3a3a3a" stroke-width="0.4" /><path d="M-3.4-1.8L0 0v3.8L-3.4 2z" fill="#5a4a3a" stroke="#3a3a3a" stroke-width="0.4" /><path d="M3.4-1.8L0 0v3.8L3.4 2z" fill="#8a7458" stroke="#3a3a3a" stroke-width="0.4" /></g><rect x="-2.2" y="0.6" width="1.2" height="1.6" fill="#c8b490"/></g><g transform="translate(414.6,35.2)"><g transform="scale(.88)"><path d="M-3.4-1.8L0-3.6 3.4-1.8 0 0z" fill="#3a3a3a" stroke="#555" stroke-width="0.3" /><path d="M-3.4-1.8L0 0v3.8L-3.4 2z" fill="#0a0a0a" stroke="#555" stroke-width="0.3" /><path d="M3.4-1.8L0 0v3.8L3.4 2z" fill="#1c1c1c" stroke="#555" stroke-width="0.3" /></g></g><rect x="419.9" y="30.2" width="10.5" height="10.2" fill="#cce4f7" stroke="#a8cdee" stroke-width=".3"/><g transform="translate(425.2,35.2)"><g transform="scale(.88)"><path d="M-3.4-1.8L0-3.6 3.4-1.8 0 0z" fill="#a8b8e0" stroke="#445" stroke-width="0.4" /><path d="M-3.4-1.8L0 0v3.8L-3.4 2z" fill="#5a6a9a" stroke="#445" stroke-width="0.4" /><path d="M3.4-1.8L0 0v3.8L3.4 2z" fill="#7a8ac0" stroke="#445" stroke-width="0.4" /></g><path d="M-1.7-2.7L1.7-.9" fill="none" stroke="#e8e8f8" stroke-width="0.4" /><path d="M-3.4 0L0 1.9 3.4 0" fill="none" stroke="#c8d0f0" stroke-width="0.4" /></g><g transform="translate(435.0,35.2)"><g transform="scale(.88)"><path d="M-3.4-1.8L0-3.6 3.4-1.8 0 0z" fill="#b48ad8" stroke="#556" stroke-width="0.4" /><path d="M-3.4-1.8L0 0v3.8L-3.4 2z" fill="#8a6ab8" stroke="#556" stroke-width="0.4" /><path d="M3.4-1.8L0 0v3.8L3.4 2z" fill="#6a9a6a" stroke="#556" stroke-width="0.4" /></g><path d="M-3.4 0L0 1.9 3.4 0" fill="none" stroke="#d8e8c8" stroke-width="0.5" /><path d="M-1.7-2.7L1.7-.9" fill="none" stroke="#e8d8f8" stroke-width="0.4" /></g><g transform="translate(444.9,35.2)"><path d="M0 .6V-4" fill="none" stroke="#28a838" stroke-width="1.1" /><path d="M0 .6L-4 3.2" fill="none" stroke="#1a3ad8" stroke-width="1.2" /><path d="M0 .6L4 3.4" fill="none" stroke="#e02020" stroke-width="1.2" /><path d="M-2.6-1.6L2.4 2.6" fill="none" stroke="#1a1a1a" stroke-width="0.9" /><circle cx="0" cy="0.6" r="0.9" fill="#111"/></g><g transform="translate(455.4,35.2)"><path d="M-2.4-.6L1.4-4 3.8-2 0 1.6z" fill="#fff" stroke="#e03030" stroke-width="0.7" /><rect x="-4" y="0.6" width="6" height="3.4" fill="#111"/><rect x="-3" y="1.4" width="3.6" height="1.4" fill="#e8e8e8"/></g><g transform="translate(466.4,35.2)"><path d="M-3-.6L-.4-2.6 2.6-1.6 3 1.2.4 2.8-2.6 1.8z" fill="#fdfdfd" stroke="#333" stroke-width="0.6" /><circle cx="2.8" cy="-1.4" r="0.8" fill="#e03030"/><circle cx="-2.8" cy="1.8" r="0.6" fill="#e03030"/></g><g transform="translate(476.3,35.2)"><path d="M-4 1.6L-.6-2.4 4 1.6 0 3z" fill="#c8d8f0" stroke="#7a8aa8" stroke-width="0.4" /><path d="M-2.6 .8L-.6-2.4 1.6.8" fill="#4a8ae0" /><path d="M-0.4 -0.4L2.8 3" stroke="#e8b020" stroke-width="0.8" fill="none"/></g><g transform="translate(486.8,35.2)"><path d="M-3 3.6L-.4-3 .6-3 3.2 3.6" fill="none" stroke="#8a9ab4" stroke-width="0.7" /><path d="M-.4-3.4L-3.4.4" fill="none" stroke="#3a78d8" stroke-width="0.8" /><circle cx="0" cy="-3" r="0.8" fill="#5a6a8a"/><path d="M1 -1L3.6 -2.4" stroke="#3a78d8" stroke-width="0.5" fill="none"/></g><g transform="translate(497.4,35.2)"><path d="M-3.8-2.8L3.8 3.8 1.4-4z" fill="none" stroke="#28b838" stroke-width="1.1" /><path d="M-1-.6L2.2.6" fill="none" stroke="#28b838" stroke-width="0.9" /></g><g transform="translate(507.9,35.2)"><path d="M-3.4-3.2h5.6v6h-5.6z" fill="#b8e8a8" /><circle cx="-1.6" cy="-1.6" r="1.2" fill="#f0e020"/><circle cx="1.6" cy="1.4" r="1.9" fill="#0a0a0a"/><circle cx="1" cy="1" r="0.9" fill="#1a3ad8"/><circle cx="-2.6" cy="-3" r="0.6" fill="#e03030"/></g><g transform="translate(517.8,35.2)"><g transform="scale(.88)"><path d="M-3.4-1.8L0-3.6 3.4-1.8 0 0z" fill="#e8dcc8" stroke="#6a6a6a" stroke-width="0.4" /><path d="M-3.4-1.8L0 0v3.8L-3.4 2z" fill="#9aa0a8" stroke="#6a6a6a" stroke-width="0.4" /><path d="M3.4-1.8L0 0v3.8L3.4 2z" fill="#c8b898" stroke="#6a6a6a" stroke-width="0.4" /></g><path d="M-1.7-2.7L1.7-.9M1.7-2.7L-1.7-.9" fill="none" stroke="#6a7a9a" stroke-width="0.5" /></g><g transform="translate(528.3,35.2) scale(0.95)"><path d="M-1.6-3.8L-4-2.2l1 1.8 1-.4V3.8h4V-.8l1 .4 1-1.8L1.6-3.8C1-3 -1-3-1.6-3.8z" fill="#f0a818" stroke="#b87808" stroke-width="0.4" /><path d="M-1-1.2h2v2.6h-2z" fill="#f8d048" /></g><g transform="translate(538.2,35.2) scale(0.95)"><path d="M-1.6-3.8L-4-2.2l1 1.8 1-.4V3.8h4V-.8l1 .4 1-1.8L1.6-3.8C1-3 -1-3-1.6-3.8z" fill="#2a78c8" stroke="#0c4a86" stroke-width="0.4" /><path d="M-1-1.2h2v2.6h-2z" fill="#6ab0e8" /></g><g transform="translate(548.4,35.2)"><path d="M-4 1L0-.8 4 1 0 3z" fill="#1c4ae0" /><path d="M-4 1v1.2L0 4l4-1.8V1L0 3z" fill="#0c2a90" /><path d="M0 1.6L-1.8-.6h1.1V-3.8h1.4v3.2h1.1z" fill="#e02020" /><text x="2.6" y="-1.6" font-size="2.6" fill="#1c4ae0" font-family="Liberation Sans,sans-serif" >2</text></g><g transform="translate(559.1,35.2)"><path d="M-4 1L0-.8 4 1 0 3z" fill="#8a5a2a" /><path d="M-4 1v1.2L0 4l4-1.8V1L0 3z" fill="#4a3010" /><path d="M0 1.6L-1.8-.6h1.1V-3.8h1.4v3.2h1.1z" fill="#e02020" /><rect x="0.8" y="1.2" width="1.6" height="1.2" fill="#111"/></g><g transform="translate(568.9,35.2) scale(0.85)"><path d="M-3.4-3L1.6 2.6" fill="none" stroke="#e8c818" stroke-width="1.3" /><path d="M1 2l2 2" fill="none" stroke="#e03030" stroke-width="1.1" /><circle cx="-3" cy="-3.2" r="0.8" fill="#e03030"/><circle cx="1.8" cy="-1.8" r="1" fill="#a8d8a8"/><circle cx="2.8" cy="-3" r="0.6" fill="#e8a020"/></g><g transform="translate(579.5,35.2) scale(0.85)"><rect x="-3.4" y="-3.2" width="6.8" height="6.4" fill="#d8c4a0" stroke="#8a7a60" stroke-width="0.4"/><path d="M-2.6 2.6L.4-2.4 2.6 2.6z" fill="#e03030" /><path d="M-3-2.6L2.6 2.8" fill="none" stroke="#2a2a2a" stroke-width="0.8" /></g><g transform="translate(590.0,35.2) scale(0.85)"><rect x="-3.4" y="-3.2" width="6.8" height="6.4" fill="#d8c4a0" stroke="#8a7a60" stroke-width="0.4"/><path d="M-2.6 2.6L.4-2.4 2.6 2.6z" fill="#3a68d8" /><path d="M3-3L-2.6 2.8" fill="none" stroke="#2a2a2a" stroke-width="0.8" /></g><g transform="translate(600.5,35.2) scale(0.85)"><path d="M-3.2 3.4L2.4-2.6" fill="none" stroke="#6a4a2a" stroke-width="1.2" /><path d="M3.2 3.4L-2.4-2.6" fill="none" stroke="#6a4a2a" stroke-width="1.2" /><rect x="-3.8" y="-3.8" width="2.6" height="1.8" fill="#3a3a3a"/><path d="M2-3.8c1.4 0 2 1 1.8 2.2l-1.2-.8-.8.8z" fill="#5a5a5a" /></g><g transform="translate(611.0,35.2) scale(0.9)"><path d="M0-3.4C1.2-2.6 2.4-2.4 3.2-2.4 3.2.8 2 2.6 0 3.6-2 2.6-3.2.8-3.2-2.4-2.4-2.4-1.2-2.6 0-3.4z" fill="#c0c4cc" stroke="#8a909c" stroke-width="0.6" /><path d="M0-1.8V2M-1.8-.4h3.6" fill="none" stroke="#9aa0b0" stroke-width="0.7" /></g><g transform="translate(620.9,35.2) scale(0.9)"><path d="M-3.8.6C-3.4-2.4-.4-3.6 1.6-3c1.4.4 2.4 1.4 2.2 2.4-.4 2-2.6 3.4-5 3.4-1.4 0-2.8-.8-2.6-2.2z" fill="#e8d49c" stroke="#b89c60" stroke-width="0.5" /><path d="M-2.6 1.4C-.6 1.8 1.8.8 3.2-.8" fill="none" stroke="#c8ac70" stroke-width="0.5" /></g><g transform="translate(631.2,35.2)"><path d="M-3.4 3.8C-4.2 1.6-3.2-.4-2.2-1.2-2.4-2.6-1.2-4 0-4s2.2 1 2.2 2.4C3.4-.8 4.2 1.6 3.4 3.8z" fill="#2e8a2e" /><path d="M-3.4 3.8l1-1.4.8 1.2.8-1.6.8 1.6.9-1.4.8 1.4.9-1.2.8 1.4z" fill="#1a5a1a" /><circle cx="-0.8" cy="-1.6" r="0.5" fill="#0a3a0a"/><circle cx="0.9" cy="-1.6" r="0.5" fill="#0a3a0a"/></g><g transform="translate(641.1,35.2)"><path d="M-3.2 3.8V-1.4C-3.2-3.4-1.6-4.2 0-4.2s3.2.8 3.2 2.8V3.8z" fill="#6a3c1c" /><ellipse cx="0" cy="0" rx="2" ry="1.6" fill="#c89a6a"/><circle cx="-1" cy="-1.8" r="0.5" fill="#111"/><circle cx="1" cy="-1.8" r="0.5" fill="#111"/><rect x="-1.2" y="0.2" width="2.4" height="0.7" fill="#111"/></g><g transform="translate(652.2,35.2)"><path d="M0-3.8C1-3.2 1-2.4.6-1.8 1.8-1.6 2.4-.8 2 .2 3.4.6 4 1.6 3.6 2.6 3.2 3.6 1.6 3.8 0 3.8s-3.2-.2-3.6-1.2C-4 1.6-3.4.6-2 .2-2.4-.8-1.8-1.6-.6-1.8-1-2.6-.8-3.4 0-3.8z" fill="#6a4020" /><circle cx="-1" cy="1" r="0.6" fill="#fff"/><circle cx="1" cy="1" r="0.6" fill="#fff"/><path d="M-1.2 2.4C-.4 3 .4 3 1.2 2.4" fill="none" stroke="#fff" stroke-width="0.4" /></g><g transform="translate(661.6,35.2)"><path d="M-2.8-2.8L2.8 2.8M2.8-2.8L-2.8 2.8" fill="none" stroke="#dccaca" stroke-width="0.45" /><path d="M-3-.4h6M-.2-3v6" fill="none" stroke="#ecc4c4" stroke-width="0.45" /><circle cx="0" cy="0" r="0.7" fill="#e8a8a8"/><circle cx="-2" cy="-1.6" r="0.5" fill="#c8c8c8"/><circle cx="2" cy="1.4" r="0.5" fill="#c8c8c8"/></g><g transform="translate(671.9,35.2)"><path d="M-2.8-2.8L2.8 2.8M2.8-2.8L-2.8 2.8" fill="none" stroke="#dccaca" stroke-width="0.45" /><path d="M-3-.4h6M-.2-3v6" fill="none" stroke="#ecc4c4" stroke-width="0.45" /><circle cx="0" cy="0" r="0.7" fill="#e8a8a8"/><circle cx="-2" cy="-1.6" r="0.5" fill="#c8c8c8"/><circle cx="2" cy="1.4" r="0.5" fill="#c8c8c8"/></g><g transform="translate(681.3,35.2)"><path d="M-2.8-2.8L2.8 2.8M2.8-2.8L-2.8 2.8" fill="none" stroke="#dccaca" stroke-width="0.45" /><path d="M-3-.4h6M-.2-3v6" fill="none" stroke="#ecc4c4" stroke-width="0.45" /><circle cx="0" cy="0" r="0.7" fill="#e8a8a8"/><circle cx="-2" cy="-1.6" r="0.5" fill="#c8c8c8"/><circle cx="2" cy="1.4" r="0.5" fill="#c8c8c8"/></g><g transform="translate(692.4,35.2)"><path d="M-3.2 3.2L3.2-3.2" fill="none" stroke="#3a3a3a" stroke-width="0.9" /><path d="M-1.6 3.2L3.2-1.6" fill="none" stroke="#4a4a4a" stroke-width="0.7" /><path d="M-3.4-1l1.4 1.4" fill="none" stroke="#4a4a4a" stroke-width="0.5" /></g><g transform="translate(702.7,35.2)"><path d="M-3.2 3.2L3.2-3.2" fill="none" stroke="#3a3a3a" stroke-width="0.9" /><path d="M-1.6 3.2L3.2-1.6" fill="none" stroke="#e03030" stroke-width="0.7" /><path d="M-3.4-1l1.4 1.4" fill="none" stroke="#e03030" stroke-width="0.5" /></g><g transform="translate(713.0,35.2)"><path d="M-3.2 3.2L3.2-3.2" fill="none" stroke="#3a3a3a" stroke-width="0.9" /><path d="M-1.6 3.2L3.2-1.6" fill="none" stroke="#38b038" stroke-width="0.7" /><path d="M-3.4-1l1.4 1.4" fill="none" stroke="#38b038" stroke-width="0.5" /></g><g transform="translate(723.2,35.2)"><path d="M-3.2 3.2L3.2-3.2" fill="none" stroke="#3a3a3a" stroke-width="0.9" /><path d="M-1.6 3.2L3.2-1.6" fill="none" stroke="#3a58e0" stroke-width="0.7" /><path d="M-3.4-1l1.4 1.4" fill="none" stroke="#3a58e0" stroke-width="0.5" /></g><g transform="translate(734.0,35.2)"><circle cx="0" cy="0" r="3.9" fill="#0a0a0a"/><text x="-1.7" y="1.7" font-size="4.8" fill="#fff" font-family="Liberation Sans,sans-serif" font-weight="bold">U</text></g><rect x="739.5" y="30.6" width=".4" height="9.600000000000001" fill="#cdcdcd"/><path d="M741.6 30.6V40.2" stroke="#b8b8b8" stroke-width=".8" stroke-dasharray=".5 .5"/><g transform="translate(749.7,35.2)"><path d="M0-4L3.6 3.6H-3.6z" fill="#a848d8" /><path d="M0-4L1.2 3.6H-1.2z" fill="#6a6a7a" /><path d="M-3.6 3.6h7.2" fill="none" stroke="#4a4a5a" stroke-width="0.6" /></g><g transform="translate(5.8,50.3) scale(0.88)"><rect x="-3.2" y="-3.2" width="6.4" height="6.4" fill="#1a1a1a"/><rect x="-3.2" y="0.2" width="3" height="3" fill="#4cae4c"/><path d="M-1-2.4v4l1-.9.8 1.6.8-.3-.8-1.6h1.4z" fill="#fff" /></g><g transform="translate(5.8,60.6) scale(0.88)"><rect x="-3.2" y="-3.2" width="6.4" height="6.4" fill="#4cae4c" stroke="#2a4a2a" stroke-width="0.5"/><rect x="0.2" y="-0.4" width="2.4" height="3" fill="#1a3a1a"/><rect x="-2.4" y="-2.4" width="2.2" height="1.6" fill="#d8f0d8"/></g><g transform="translate(5.8,70.8) scale(0.88)"><rect x="-3.2" y="-3.2" width="6.4" height="6.4" fill="#e8f4e8" stroke="#2a3a2a" stroke-width="0.6"/><rect x="-3.2" y="0.2" width="3" height="3" fill="#4cae4c"/><rect x="0.6" y="-2.4" width="2" height="2" fill="#2a2a2a"/><path d="M-2.6 -0.4L2.6 -0.4" stroke="#2a3a2a" stroke-width="0.4" fill="none"/></g><g transform="translate(5.8,81.1) scale(0.88)"><rect x="-3.2" y="-2.8" width="6.4" height="1.3" fill="#4cae4c"/><rect x="-3.2" y="-0.7" width="6.4" height="1.3" fill="#4cae4c"/><rect x="-3.2" y="1.4" width="6.4" height="1.3" fill="#4cae4c"/></g><g transform="translate(5.8,91.4) scale(0.88)"><rect x="-3.2" y="-2.8" width="5" height="1.2" fill="#a4d8a0"/><rect x="-3.2" y="-0.7" width="3" height="1.2" fill="#a4d8a0"/><rect x="-3.2" y="1.4" width="5" height="1.2" fill="#a4d8a0"/><path d="M.4-1.4L3.4.6.4 2.4z" fill="#111" /></g><g transform="translate(5.8,101.6) scale(0.88)"><rect x="-3.2" y="-2.8" width="6" height="1.2" fill="#a4d8a0"/><rect x="-3.2" y="-0.7" width="3" height="1.2" fill="#4cae4c"/><rect x="-3.2" y="1.4" width="6" height="1.2" fill="#a4d8a0"/><rect x="0.2" y="-0.5" width="3.2" height="1" fill="#222"/></g><g transform="translate(5.8,111.9) scale(0.88)"><rect x="-3" y="-0.5" width="6" height="1.3" fill="#4cae4c"/></g><g transform="translate(5.8,122.2) scale(0.88)"><rect x="-3.4" y="-0.4" width="3.4" height="1.1" fill="#4cae4c"/><path d="M.2-1.6L3.2.2.2 2z" fill="#111" /></g><g transform="translate(5.8,132.5) scale(0.88)"><rect x="-3.4" y="-0.4" width="3" height="1.1" fill="#4cae4c"/><rect x="-0.2" y="0.2" width="3.4" height="1" fill="#222"/></g><g transform="translate(5.8,142.7) scale(0.88)"><path d="M-3.4-2.4h6.8" fill="none" stroke="#6a8ab8" stroke-width="0.7" stroke-dasharray=".7 .4"/><path d="M-3.4 2.4h6.8" fill="none" stroke="#4cae4c" stroke-width="0.8" stroke-dasharray=".7 .4"/><circle cx="0" cy="0" r="0.9" fill="#2a6ad8"/></g><g transform="translate(5.8,153.0) scale(0.88)"><path d="M-3-1h4.6" fill="none" stroke="#445" stroke-width="0.7" stroke-dasharray=".7 .4"/><path d="M1 -.2l2 2h-2z" fill="#2a6ad8" /></g><g transform="translate(5.8,163.3) scale(0.88)"><path d="M-3-1h4.6" fill="none" stroke="#445" stroke-width="0.7" stroke-dasharray=".7 .4"/><path d="M1.2.2l1.8 1.8M3 .2L1.2 2" fill="none" stroke="#e02828" stroke-width="0.6" /></g><g transform="translate(5.8,173.5) scale(0.88)"><rect x="-3.2" y="-3.2" width="6.4" height="6.4" fill="#f4f8fd" stroke="#334" stroke-width="0.6"/><path d="M-1 -3.2L-1 3.2" stroke="#6aa4e8" stroke-width="0.5" fill="none"/><path d="M1.2 -3.2L1.2 3.2" stroke="#6aa4e8" stroke-width="0.5" fill="none"/><path d="M-3.2 -1L3.2 -1" stroke="#6aa4e8" stroke-width="0.5" fill="none"/><path d="M-3.2 1.2L3.2 1.2" stroke="#6aa4e8" stroke-width="0.5" fill="none"/><rect x="-3.2" y="-3.2" width="2.2" height="2.2" fill="#2a7ae0"/><rect x="1.2" y="-1" width="2" height="2.2" fill="#8abcf0"/></g><g transform="translate(5.8,183.8) scale(0.88)"><rect x="-3.2" y="-3.2" width="6.4" height="6.4" fill="#d4e6fa" stroke="#5a6a8a" stroke-width="0.6"/><path d="M-1 -3.2L-1 3.2" stroke="#3a7ad8" stroke-width="0.5" fill="none"/><path d="M1.2 -3.2L1.2 3.2" stroke="#3a7ad8" stroke-width="0.5" fill="none"/><path d="M-3.2 -1L3.2 -1" stroke="#3a7ad8" stroke-width="0.5" fill="none"/><path d="M-3.2 1.2L3.2 1.2" stroke="#3a7ad8" stroke-width="0.5" fill="none"/><rect x="-1" y="-3.2" width="4.2" height="2.2" fill="#2a7ae0"/><rect x="-1" y="1.2" width="2.2" height="2" fill="#4a94e8"/></g><g transform="translate(5.8,194.1) scale(0.88)"><rect x="-3.2" y="-3.2" width="6.4" height="6.4" fill="#a8ccf4" stroke="#5a6a8a" stroke-width="0.6"/><path d="M-1 -3.2L-1 3.2" stroke="#2a6ad0" stroke-width="0.5" fill="none"/><path d="M1.2 -3.2L1.2 3.2" stroke="#2a6ad0" stroke-width="0.5" fill="none"/><path d="M-3.2 -1L3.2 -1" stroke="#2a6ad0" stroke-width="0.5" fill="none"/><path d="M-3.2 1.2L3.2 1.2" stroke="#2a6ad0" stroke-width="0.5" fill="none"/><rect x="-1" y="-1" width="4.2" height="4.2" fill="#2a7ae0"/></g><g transform="translate(5.8,204.3) scale(0.88)"><path d="M-3.2-3h6.4v5.6h-4.4l-2 1z" fill="#fff" stroke="#333" stroke-width="0.7" /><circle cx="0" cy="-0.2" r="0.6" fill="#e02828"/><circle cx="-2" cy="-0.2" r="0.4" fill="#e02828"/><circle cx="2" cy="-0.2" r="0.4" fill="#e02828"/><circle cx="0" cy="-2" r="0.4" fill="#e02828"/><circle cx="0" cy="1.6" r="0.4" fill="#e02828"/></g><g transform="translate(5.8,214.6) scale(0.88)"><path d="M-3.2-2.4L0-3.4 3.2-2.4V2.4L0 3.4-3.2 2.4z" fill="#fff" stroke="#333" stroke-width="0.7" /><ellipse cx="0" cy="0" rx="2" ry="1.4" fill="none" stroke="#e02828" stroke-width="0.6"/></g><g transform="translate(5.8,224.9) scale(0.88)"><path d="M-3.2-2.6h4l2.4 2v3.2h-4.4l-2-2z" fill="#fff" stroke="#333" stroke-width="0.6" /><path d="M-2.6 2.4C-1.6-.4.8-1.8 3-1.6" fill="none" stroke="#e02828" stroke-width="0.6" /><circle cx="0" cy="1.2" r="0.8" fill="#e8b020"/></g><g transform="translate(5.8,235.2) scale(0.88)"><path d="M-3.2 3.2L3.2-3.2" fill="none" stroke="#e02828" stroke-width="0.9" /><path d="M3.2 3.2V.2L.2 3.2z" fill="#2a6ad8" /></g><g transform="translate(5.8,245.4) scale(0.88)"><rect x="-3" y="-3" width="6" height="6" fill="#e8e8e8" stroke="#8a8a8a" stroke-width="0.5"/><path d="M-3-3L3 3" fill="none" stroke="#2a6ad8" stroke-width="1" /></g><g transform="translate(5.8,255.7) scale(0.88)"><rect x="-3" y="-3" width="6" height="6" fill="#d8e4f4" stroke="#8a8a8a" stroke-width="0.5"/><path d="M-3-3L3 3" fill="none" stroke="#2a6ad8" stroke-width="1.3" /></g><g transform="translate(5.8,266.0) scale(0.88)"><rect x="-3" y="-3" width="6" height="6" fill="#e4e8f0" stroke="#8a8a8a" stroke-width="0.5"/><circle cx="-1.8" cy="-1.8" r="0.6" fill="#2a6ad8"/><circle cx="-1.8" cy="0.0" r="0.6" fill="#2a6ad8"/><circle cx="-1.8" cy="1.8" r="0.6" fill="#2a6ad8"/><circle cx="0.0" cy="-1.8" r="0.6" fill="#2a6ad8"/><circle cx="0.0" cy="0.0" r="0.6" fill="#2a6ad8"/><circle cx="0.0" cy="1.8" r="0.6" fill="#2a6ad8"/><circle cx="1.8" cy="-1.8" r="0.6" fill="#2a6ad8"/><circle cx="1.8" cy="0.0" r="0.6" fill="#2a6ad8"/><circle cx="1.8" cy="1.8" r="0.6" fill="#2a6ad8"/></g><g transform="translate(5.8,276.2) scale(0.88)"><rect x="-3" y="-3" width="6" height="6" fill="#f0e4e4" stroke="#8a8a8a" stroke-width="0.5"/><circle cx="-1.8" cy="-1.8" r="0.6" fill="#e02828"/><circle cx="-1.8" cy="0.0" r="0.6" fill="#e02828"/><circle cx="-1.8" cy="1.8" r="0.6" fill="#e02828"/><circle cx="0.0" cy="-1.8" r="0.6" fill="#e02828"/><circle cx="0.0" cy="0.0" r="0.6" fill="#e02828"/><circle cx="0.0" cy="1.8" r="0.6" fill="#e02828"/><circle cx="1.8" cy="-1.8" r="0.6" fill="#e02828"/><circle cx="1.8" cy="0.0" r="0.6" fill="#e02828"/><circle cx="1.8" cy="1.8" r="0.6" fill="#e02828"/></g><g transform="translate(5.8,286.5) scale(0.88)"><rect x="-3" y="-3" width="6" height="6" fill="#fafafa" stroke="#8a8a8a" stroke-width="0.5"/><path d="M0 -3L0 3" stroke="#8a8a8a" stroke-width="0.5" fill="none"/><path d="M-3 0L3 0" stroke="#8a8a8a" stroke-width="0.5" fill="none"/></g><g transform="translate(5.8,296.8) scale(0.88)"><rect x="-3" y="-3" width="6" height="6" fill="#fafafa" stroke="#555" stroke-width="0.6"/><path d="M0 -3L0 3" stroke="#555" stroke-width="0.6" fill="none"/><path d="M-3 0L3 0" stroke="#555" stroke-width="0.6" fill="none"/></g><g transform="translate(5.8,307.1) scale(0.88)"><rect x="-3" y="-3" width="6" height="6" fill="#dce8f8" stroke="#445" stroke-width="0.5"/><path d="M0 -3L0 3" stroke="#445" stroke-width="0.5" fill="none"/><path d="M-3 0L3 0" stroke="#445" stroke-width="0.5" fill="none"/><circle cx="-1.5" cy="-1.5" r="0.7" fill="#2a6ad8"/><circle cx="1.5" cy="-1.5" r="0.7" fill="#2a6ad8"/><circle cx="-1.5" cy="1.5" r="0.7" fill="#2a6ad8"/><rect x="0.6" y="0.6" width="1.8" height="1.8" fill="#2a6ad8"/></g><g transform="translate(5.8,317.3) scale(0.88)"><path d="M-3.2-1.4L-.4-3 3-2l-.4 3.6L-2.6 2.6z" fill="#b89a68" stroke="#8a7448" stroke-width="0.4" /><rect x="0.6" y="0.8" width="2.6" height="2.4" fill="#3a8ae0"/></g><g transform="translate(5.8,327.6) scale(0.88)"><path d="M3.2-1.8H-.6v-1.4L-3.2-.8-.6 1.6V.2h3.8z" fill="#6ab4f0" /><path d="M3.4 1.4l-2 1.8v-1H-.8v-1.4h2.2v-1z" fill="#9accf8" /></g><g transform="translate(5.8,337.9) scale(0.88)"><rect x="-3" y="-3" width="6" height="6" fill="#fbe8e8" stroke="#e85050" stroke-width="0.6"/><path d="M-3 0C-1-.4 0 1 0 3" fill="none" stroke="#e85050" stroke-width="0.5" /><path d="M-3-1.6C.4-2 1.6 0 1.6 3" fill="none" stroke="#f09090" stroke-width="0.5" /></g><g transform="translate(5.8,348.1) scale(0.88)"><path d="M-3.2-2L-1-3.4h4.2v5L1 3.2h-4.2z" fill="#fff" stroke="#e02828" stroke-width="0.7" /><path d="M-3.2-2H1v5.2M1-2l2.2-1.4" fill="none" stroke="#e02828" stroke-width="0.6" /><circle cx="-1" cy="0.6" r="0.7" fill="#333"/><circle cx="1" cy="-3.2" r="0.5" fill="#333"/></g><g transform="translate(5.8,358.4) scale(0.88)"><path d="M-2.8-1.6L-.6-3l3.2.6.2 3.6-2.2 1.8-3.2-.8z" fill="#3a8ad8" /><path d="M-2.8-1.6L.4-1 .6 3" fill="none" stroke="#1a5aa8" stroke-width="0.5" /><circle cx="-1" cy="-0.2" r="1" fill="#8ac4f4"/></g><g transform="translate(5.8,368.7)"><rect x="-4.4" y="-4.4" width="8.8" height="8.8" fill="#0c0c0c"/><path d="M-2.8-2.6l1.2 1.2 1.4-1.6" fill="none" stroke="#ddd" stroke-width="0.5" /><rect x="-1.6" y="0.4" width="1.2" height="2.4" fill="#e03030"/><rect x="-0.2" y="0.4" width="1.2" height="2.4" fill="#38b038"/><rect x="1.2" y="0.4" width="1.2" height="2.4" fill="#a848d8"/><path d="M-3 3L3.2 3" stroke="#e8c020" stroke-width="0.6" fill="none"/></g><g transform="translate(5.8,378.9)"><rect x="-4.4" y="-4.4" width="8.8" height="8.8" fill="#0c0c0c"/><circle cx="-2" cy="-1" r="1.2" fill="#3a6ae8"/><circle cx="-0.4" cy="-1.6" r="1.2" fill="#e03030"/><circle cx="1.2" cy="-1.2" r="1.2" fill="#e8c020"/><circle cx="2.6" cy="-0.6" r="1" fill="#38b038"/><path d="M-3.4 0h6.8C3.2 2.4 1.6 3.4 0 3.4S-3.2 2.4-3.4 0z" fill="#f4f4f4" /></g><g transform="translate(5.8,389.2)"><rect x="-4.4" y="-4.4" width="8.8" height="8.8" fill="#b4b4b4"/><circle cx="-2" cy="-1" r="1.2" fill="#3a6ae8"/><circle cx="-0.4" cy="-1.6" r="1.2" fill="#e03030"/><circle cx="1.2" cy="-1.2" r="1.2" fill="#e8c020"/><circle cx="2.6" cy="-0.6" r="1" fill="#38b038"/><path d="M-3.4 0h6.8C3.2 2.4 1.6 3.4 0 3.4S-3.2 2.4-3.4 0z" fill="#f4f4f4" stroke="#888" stroke-width="0.3" /></g><g transform="translate(5.8,399.5)"><rect x="-4.4" y="-4.4" width="8.8" height="7.6" fill="#e0e0e0"/><circle cx="-2" cy="-1" r="1.2" fill="#3a6ae8"/><circle cx="-0.4" cy="-1.6" r="1.2" fill="#e03030"/><circle cx="1.2" cy="-1.2" r="1.2" fill="#e8c020"/><circle cx="2.6" cy="-0.6" r="1" fill="#38b038"/><path d="M-3.4 0h6.8C3.2 2.4 1.6 3.2 0 3.2S-3.2 2.4-3.4 0z" fill="#f8f8f8" stroke="#888" stroke-width="0.3" /></g><g transform="translate(17.6,50.3) scale(0.88)"><path d="M-3.2 1.2L.6-1.6 3.2-3 2 2z" fill="none" stroke="#ea5a5a" stroke-width="0.45" /><rect x="-3.9975" y="0.40249999999999997" width="1.595" height="1.595" fill="#e02828"/><rect x="-0.1975" y="-2.3975" width="1.595" height="1.595" fill="#e02828"/><rect x="2.4025000000000003" y="-3.7975" width="1.595" height="1.595" fill="#e02828"/><rect x="1.2025000000000001" y="1.2025000000000001" width="1.595" height="1.595" fill="#e02828"/></g><g transform="translate(17.6,60.6) scale(0.88)"><path d="M-3-3L3 3M3-3L-3 3" fill="none" stroke="#ea5a5a" stroke-width="0.45" /><rect x="-3.7975" y="-3.7975" width="1.595" height="1.595" fill="#e02828"/><rect x="2.2025" y="2.2025" width="1.595" height="1.595" fill="#e02828"/><rect x="2.2025" y="-3.7975" width="1.595" height="1.595" fill="#e02828"/><rect x="-3.7975" y="2.2025" width="1.595" height="1.595" fill="#e02828"/><circle cx="0" cy="0" r="0.9" fill="#f0c020"/></g><g transform="translate(17.6,70.8) scale(0.88)"><path d="M-3-3L3 3M3-3L-3 3" fill="none" stroke="#ea5a5a" stroke-width="0.45" /><rect x="-3.7975" y="-3.7975" width="1.595" height="1.595" fill="#e02828"/><rect x="2.2025" y="2.2025" width="1.595" height="1.595" fill="#e02828"/><rect x="2.2025" y="-3.7975" width="1.595" height="1.595" fill="#e02828"/><rect x="-3.7975" y="2.2025" width="1.595" height="1.595" fill="#e02828"/><circle cx="0" cy="0" r="1.1" fill="#f0c020"/><rect x="-3" y="-3" width="6" height="6" fill="none" stroke="#f0a0a0" stroke-width="0.3"/></g><g transform="translate(17.6,81.1) scale(0.88)"><path d="M-3 3L3-3" fill="none" stroke="#e8a020" stroke-width="0.7" /><rect x="-3.7975" y="2.2025" width="1.595" height="1.595" fill="#e02828"/><rect x="2.2025" y="-3.7975" width="1.595" height="1.595" fill="#e02828"/><rect x="-1.98" y="-3.18" width="1.16" height="1.16" fill="#e02828"/><rect x="0.82" y="2.02" width="1.16" height="1.16" fill="#e02828"/><rect x="-3.58" y="-1.18" width="1.16" height="1.16" fill="#e02828"/><rect x="2.42" y="0.020000000000000018" width="1.16" height="1.16" fill="#e02828"/><circle cx="0" cy="0" r="0.8" fill="#f0c020"/></g><g transform="translate(17.6,91.4) scale(0.88)"><path d="M-3.2 3C-2 .6 1-.6 3.2-3" fill="none" stroke="#ea5a5a" stroke-width="0.5" /><rect x="-3.9975" y="2.2025" width="1.595" height="1.595" fill="#e02828"/><rect x="2.4025000000000003" y="-3.7975" width="1.595" height="1.595" fill="#e02828"/><rect x="-1.125" y="-0.5249999999999999" width="1.45" height="1.45" fill="#e02828"/></g><g transform="translate(17.6,101.6) scale(0.88)"><rect x="-3" y="-3" width="6" height="6" fill="none" stroke="#ea5a5a" stroke-width="0.45"/><path d="M-3-3L3 3" fill="none" stroke="#333" stroke-width="0.5" /><rect x="-3.7975" y="-3.7975" width="1.595" height="1.595" fill="#e02828"/><rect x="2.2025" y="2.2025" width="1.595" height="1.595" fill="#e02828"/><rect x="2.2025" y="-3.7975" width="1.595" height="1.595" fill="#e02828"/><rect x="-3.7975" y="2.2025" width="1.595" height="1.595" fill="#e02828"/></g><g transform="translate(17.6,111.9) scale(0.88)"><path d="M-3.2-3C-.6-2.6.4-1 .4.4M.4.4L3.2-3M.4.4L-2.4 3.2" fill="none" stroke="#ea5a5a" stroke-width="0.45" /><rect x="-3.9975" y="-3.7975" width="1.595" height="1.595" fill="#e02828"/><rect x="2.4025000000000003" y="-3.7975" width="1.595" height="1.595" fill="#e02828"/><rect x="-3.1975" y="2.4025000000000003" width="1.595" height="1.595" fill="#e02828"/><rect x="-0.32499999999999996" y="-0.32499999999999996" width="1.45" height="1.45" fill="#e02828"/></g><g transform="translate(17.6,122.2) scale(0.88)"><rect x="-3" y="-3" width="6" height="6" fill="none" stroke="#ea5a5a" stroke-width="0.45"/><rect x="-3.7975" y="-3.7975" width="1.595" height="1.595" fill="#e02828"/><rect x="2.2025" y="2.2025" width="1.595" height="1.595" fill="#e02828"/><rect x="2.2025" y="-3.7975" width="1.595" height="1.595" fill="#e02828"/><rect x="-3.7975" y="2.2025" width="1.595" height="1.595" fill="#e02828"/><path d="M-3 3L0 0" fill="none" stroke="#e8b020" stroke-width="0.8" /><rect x="-1.2" y="-1.2" width="2.4" height="2.4" fill="#f4f0e0" stroke="#ccc" stroke-width="0.3"/></g><g transform="translate(17.6,132.5) scale(0.88)"><path d="M-3.2 3.2L3.2-3.2" fill="none" stroke="#ea5a5a" stroke-width="0.5" /><circle cx="0" cy="0" r="0.9" fill="#f0c020"/><rect x="-3.9975" y="2.4025000000000003" width="1.595" height="1.595" fill="#e02828"/><rect x="2.4025000000000003" y="-3.9975" width="1.595" height="1.595" fill="#e02828"/></g><g transform="translate(17.6,142.7) scale(0.88)"><rect x="-3.415" y="-4.015" width="2.03" height="2.03" fill="#e02828"/><rect x="-3.415" y="-1.015" width="2.03" height="2.03" fill="#e02828"/><rect x="-3.415" y="1.985" width="2.03" height="2.03" fill="#e02828"/><rect x="1.385" y="-4.015" width="2.03" height="2.03" fill="#e02828"/><rect x="1.385" y="-1.015" width="2.03" height="2.03" fill="#e02828"/><rect x="1.385" y="1.985" width="2.03" height="2.03" fill="#e02828"/><path d="M-2.4 -3L-2.4 3" stroke="#f0a0a0" stroke-width="0.4" fill="none"/><path d="M2.4 -3L2.4 3" stroke="#f0a0a0" stroke-width="0.4" fill="none"/></g><g transform="translate(17.6,153.0) scale(0.88)"><circle cx="0" cy="0" r="3.3" fill="#fdfdfd" stroke="#222" stroke-width="0.8"/><path d="M-2.6-1.4C-1 0 1 0 2.8-1.2" fill="none" stroke="#777" stroke-width="0.4" /></g><g transform="translate(17.6,163.3) scale(0.88)"><circle cx="-0.4" cy="-0.4" r="3" fill="#2e9a3e" stroke="#0a4a1a" stroke-width="0.5"/><circle cx="-1.2" cy="-1.2" r="1" fill="#8ad89a"/><path d="M1.6 1.6l2 2" fill="none" stroke="#1a1a1a" stroke-width="1.1" /></g><g transform="translate(17.6,173.5) scale(0.88)"><circle cx="-0.4" cy="-0.4" r="3" fill="#e02828" stroke="#6a0a0a" stroke-width="0.5"/><circle cx="-1.2" cy="-1.2" r="1" fill="#f8a0a0"/><path d="M1.6 1.6l2 2" fill="none" stroke="#1a1a1a" stroke-width="1.1" /></g><g transform="translate(17.6,183.8) scale(0.88)"><path d="M-3-1.6L-.6-3 3-2V2L.6 3.4-3 2.2z" fill="#f8f8f8" stroke="#222" stroke-width="0.7" /><path d="M-3-1.6L.6-.6V3.4M.6-.6L3-2" fill="none" stroke="#222" stroke-width="0.5" /><circle cx="-1.4" cy="-1" r="0.8" fill="#e02828"/></g><g transform="translate(17.6,194.1) scale(0.88)"><circle cx="-0.4" cy="-0.4" r="3.1" fill="#3a3a3a" stroke="#0a0a0a" stroke-width="0.5"/><path d="M-2.6-1.6L1.6 2.2M-3 0l2.4 2.6M-1-3l3.2 3" fill="none" stroke="#999" stroke-width="0.35" /><path d="M.8 1l3 2.6-3 .2z" fill="#e02828" /></g><g transform="translate(17.6,204.3) scale(0.88)"><circle cx="0" cy="0" r="3.3" fill="#1a1a1a"/><ellipse cx="0" cy="0" rx="1.4" ry="3.2" fill="none" stroke="#8a8a8a" stroke-width="0.4"/><path d="M-3.2 0L3.2 0" stroke="#8a8a8a" stroke-width="0.4" fill="none"/></g><g transform="translate(17.6,214.6) scale(0.88)"><path d="M-3.8 1.2L0-.4l3.8 1.6L0 3z" fill="#fff" stroke="#333" stroke-width="0.6" /><path d="M0 .8L-1.6-1.4h1V-3.8H.6v2.4h1z" fill="#e02828" /><path d="M-3.8 1.2v1L0 4l3.8-1.8v-1" fill="none" stroke="#333" stroke-width="0.5" /></g><g transform="translate(17.6,224.9) scale(0.88)"><rect x="-1.4" y="-1.6" width="2.8" height="5" fill="#d8d8d8" stroke="#333" stroke-width="0.7" rx="0.5"/><rect x="-0.8" y="-3.6" width="1.6" height="2" fill="#e8e8e8" stroke="#333" stroke-width="0.6"/><path d="M-1.4 0.6L1.4 0.6" stroke="#333" stroke-width="0.5" fill="none"/></g><g transform="translate(17.6,235.2) scale(0.88)"><path d="M-1 1.4V-3.8" fill="none" stroke="#2a6ad8" stroke-width="1" /><path d="M-1 1.4L3.6-2.2" fill="none" stroke="#38b038" stroke-width="1" /><path d="M-1 1.4L3.4 3.2" fill="none" stroke="#e02828" stroke-width="0.9" /><path d="M-1 1.4L-3.4 3.4" fill="none" stroke="#8ab0e8" stroke-width="0.6" /></g><g transform="translate(17.6,245.4) scale(0.88)"><path d="M-1.4 1.6V-2.6" fill="none" stroke="#1a2a9a" stroke-width="1.2" /><path d="M-1.4-4l1.4 2h-2.8z" fill="#1a2a9a" /><path d="M-1.4 1.6L2.4-.6" fill="none" stroke="#28a838" stroke-width="1.2" /><path d="M-1.4 1.6H2.6" fill="none" stroke="#e02828" stroke-width="1.1" /><path d="M4 1.6L2.2.4v2.4z" fill="#e02828" /><path d="M3.6-1.4L1.6-1.2l1.2 1.6z" fill="#28a838" /></g><g transform="translate(17.6,255.7) scale(0.88)"><path d="M-2.6 3C-3-1 -.4-3 3-2.6" fill="none" stroke="#8a8a8a" stroke-width="0.9" /><path d="M-1.2 2.6C-1.2 0 .4-1.2 2.6-1" fill="none" stroke="#38a848" stroke-width="0.9" /><path d="M3-2.6l-.4 1.6" fill="none" stroke="#555" stroke-width="0.6" /></g><g transform="translate(17.6,266.0) scale(0.88)"><path d="M-3.4 2.6C-2-1.8 1-2.6 3.6-1.8" fill="none" stroke="#e04040" stroke-width="0.6" /><rect x="-4.415" y="1.5850000000000002" width="2.03" height="2.03" fill="#8a1010"/><rect x="-2.7425" y="-1.5425" width="1.885" height="1.885" fill="#8a1010"/><rect x="-0.14249999999999996" y="-2.9425" width="1.885" height="1.885" fill="#8a1010"/><rect x="2.385" y="-2.815" width="2.03" height="2.03" fill="#8a1010"/></g><g transform="translate(17.6,276.2) scale(0.88)"><path d="M-3.4 2.6C-2-1.8 1-2.6 3.6-1.8" fill="none" stroke="#1a2a9a" stroke-width="0.7" /><rect x="-4.415" y="1.5850000000000002" width="2.03" height="2.03" fill="#0a1a6a"/><rect x="-2.7425" y="-1.5425" width="1.885" height="1.885" fill="#0a1a6a"/><rect x="-0.14249999999999996" y="-2.9425" width="1.885" height="1.885" fill="#0a1a6a"/><rect x="2.385" y="-2.815" width="2.03" height="2.03" fill="#0a1a6a"/></g><g transform="translate(17.6,286.5) scale(0.88)"><path d="M-3.2 3.2L3.2-3.2" fill="none" stroke="#e02828" stroke-width="0.8" /><path d="M-1.4 1.4L1.4-1.4" fill="none" stroke="#2a48e0" stroke-width="1" /><rect x="-3.9975" y="2.4025000000000003" width="1.595" height="1.595" fill="#2a48e0"/><rect x="2.4025000000000003" y="-3.9975" width="1.595" height="1.595" fill="#e02828"/></g><g transform="translate(17.6,296.8) scale(0.88)"><path d="M-2.6 -3.4L3 -3.8" stroke="#111" stroke-width="0.8" fill="none"/><path d="M.2 1L-2-1h1.4v-1.6h1.6V-1h1.4z" fill="#e02828" /><path d="M-4 1.6h8v2.2h-8z" fill="#1c48e0" /></g><g transform="translate(17.6,307.1) scale(0.88)"><path d="M.2.6L-1.8-1.4h1.2V-3.6h1.6v2.2h1.2z" fill="#e02828" /><path d="M-3.4 1.8L3.4.8v2.4h-6.8z" fill="#1c48e0" /></g><g transform="translate(17.6,317.3) scale(0.88)"><path d="M.4.6L-1.4-1.2h1V-3.6H.8v2.4h1z" fill="#e02828" /><path d="M-2.4 1.6h5v1.8h-5z" fill="#2a48d0" /><path d="M-3.4 3.6L-1 3.6" stroke="#8a8ae0" stroke-width="0.5" fill="none"/></g><g transform="translate(17.6,327.6)"><g transform="translate(0.0,0.0) scale(1.25)"><g transform="scale(.88)"><path d="M-3.4-1.8L0-3.6 3.4-1.8 0 0z" fill="#e02020" stroke="#111" stroke-width="0.5" /><path d="M-3.4-1.8L0 0v3.8L-3.4 2z" fill="#20a030" stroke="#111" stroke-width="0.5" /><path d="M3.4-1.8L0 0v3.8L3.4 2z" fill="#2040e0" stroke="#111" stroke-width="0.5" /></g></g></g><g transform="translate(17.6,337.9)"><g transform="translate(1.6,-1.6)"><rect x="-2.2" y="-2.2" width="4.4" height="4.4" fill="#1c8a2c" stroke="#0a0a0a" stroke-width="0.6" rx="0.8"/><circle cx="-1" cy="-1" r="0.5" fill="#fff"/><circle cx="1" cy="1" r="0.5" fill="#fff"/><circle cx="1" cy="-1" r="0.5" fill="#fff"/><circle cx="-1" cy="1" r="0.5" fill="#fff"/></g><g transform="translate(-1.8,1.8)"><rect x="-2.2" y="-2.2" width="4.4" height="4.4" fill="#d82020" stroke="#0a0a0a" stroke-width="0.6" rx="0.8"/><circle cx="-1" cy="-1" r="0.5" fill="#fff"/><circle cx="1" cy="1" r="0.5" fill="#fff"/><circle cx="0" cy="0" r="0.5" fill="#fff"/></g></g><g transform="translate(17.6,348.1)"><ellipse cx="0" cy="0.2" rx="2.6" ry="3.2" fill="none" stroke="#18b828" stroke-width="1.6"/><path d="M-2.8 3.4L2.8 -3.4" stroke="#18b828" stroke-width="1.1" fill="none"/></g><g transform="translate(17.6,358.4)"><path d="M-4-3.8h8v2.4H1.4V4h-2.8V-1.4H-4z" fill="#e01818" /><path d="M-4-3.8h8" fill="none" stroke="#f06060" stroke-width="0.5" /></g><g transform="translate(17.6,368.7)"><path d="M-4-3.8h8v2.4H1.4V4h-2.8V-1.4H-4z" fill="#18b828" /><path d="M-4-3.8h8" fill="none" stroke="#60e070" stroke-width="0.5" /></g><g transform="translate(17.6,378.9)"><path d="M-4.2-2L0-3.4 4.2-2 2.4 2.6 0 3.6-2.4 2.6z" fill="#c01818" stroke="#3a0a0a" stroke-width="0.5" /><path d="M-3.4-.8L0 .6 3.4-.8 2.6 1.2 0 2.2-2.6 1.2z" fill="#fbfbfb" /></g><g transform="translate(17.6,389.2)"><path d="M-4.2-2L0-3.4 4.2-2 2.4 2.6 0 3.6-2.4 2.6z" fill="#18a828" stroke="#0a3a0a" stroke-width="0.5" /><path d="M-3.4-.8L0 .6 3.4-.8 2.6 1.2 0 2.2-2.6 1.2z" fill="#e8f8e8" /></g><g transform="translate(17.6,399.5)"><path d="M-3.8-2.6L2.4-1 4-3.6v7L-1.2 2.6z" fill="#1c3ab8" stroke="#0a1a5a" stroke-width="0.5" /><path d="M-3.8-2.6L-1.2 2.6" fill="none" stroke="#0a1a5a" stroke-width="0.6" /><path d="M2.4-1V3" fill="none" stroke="#4a6ae0" stroke-width="0.5" /></g><path d="M1.6 42.8H10M13.4 42.8H22" stroke="#bcbcbc" stroke-width=".8" stroke-dasharray=".5 .5"/><path d="M1.8 405.6V416.2" stroke="#b8b8b8" stroke-width=".8" stroke-dasharray=".5 .5"/><g transform="translate(9.5,411.0)"><rect x="-3.4" y="-3.4" width="6.8" height="6.8" fill="#e4f6e4" stroke="#3db84d" stroke-width="0.7" stroke-dasharray="1.1 .7"/><circle cx="-1.2" cy="-1.2" r="0.6" fill="#fff"/><circle cx="1.2" cy="-1.2" r="0.6" fill="#fff"/><circle cx="-1.2" cy="1.2" r="0.6" fill="#fff"/><circle cx="1.2" cy="1.2" r="0.6" fill="#fff"/></g><g transform="translate(19.5,411.0)"><path d="M-3.6 0L0-2.2 3.6 0 0 2.2z" fill="#fff" stroke="#3db84d" stroke-width="0.8" /></g><g transform="translate(29.5,411.0)"><path d="M-3.6 0L0-2.4 3.6 0 0 2.4z" fill="#f4f4f4" stroke="#1a3a1a" stroke-width="0.9" /><ellipse cx="0" cy="0" rx="1.9" ry="1.2" fill="#3db84d"/></g><g transform="translate(39.5,411.0)"><circle cx="0" cy="0.1" r="3.5" fill="#3db84d"/><path d="M-2.4-1.2L0-2.5 2.4-1.2V1.5L0 2.8-2.4 1.5z" fill="#2a2a2a" /><path d="M-2.4-1.2L0 0 2.4-1.2M0 0v2.8" fill="none" stroke="#e8e8e8" stroke-width="0.5" /></g><g transform="translate(50.0,411.0)"><g transform="rotate(-35)"><rect x="-3.8" y="-1.3" width="4.4" height="2.6" fill="none" stroke="#3db84d" stroke-width="0.9" rx="1.3"/><rect x="-0.6" y="-1.3" width="4.4" height="2.6" fill="none" stroke="#3db84d" stroke-width="0.9" rx="1.3"/></g></g><g transform="translate(60.0,411.0)"><path d="M-.6-3.6V1.6c0 1 .6 1.6 1.8 1.4M-2.4-1.2h4" fill="none" stroke="#3db84d" stroke-width="1.1" /></g><g transform="translate(70.8,411.0)"><path d="M2.6-2.8C.4-3.6-2.4-3-2-1.4S2.6.4 2.2 2C1.8 3.4-1 3.6-2.8 2.8" fill="none" stroke="#3db84d" stroke-width="0.7" /></g><g transform="translate(80.5,411.0)"><path d="M-3.4 2.2C-1.6 1-.6.6 0 .6S1.6 1 3.4 2.2M0 .6V-2.8" fill="none" stroke="#3db84d" stroke-width="0.7" /></g><g transform="translate(90.5,411.0)"><path d="M-3.4-2.6L-.2-1.4V3.4L-3.4 2.2z" fill="#f4f4f4" stroke="#2a2a2a" stroke-width="0.7" /><path d="M3-2.8L-.2-1.4V3.4L3 2z" fill="#8a8a8a" stroke="#2a2a2a" stroke-width="0.7" /><path d="M3.4 -2.2L3.4 2.6" stroke="#2a2a2a" stroke-width="0.6" fill="none"/></g><g transform="translate(101.3,411.0)"><path d="M-3.4-2.6L-.2-1.4V3.4L-3.4 2.2z" fill="#f4f4f4" stroke="#444" stroke-width="0.7" /><path d="M3-2.8L-.2-1.4V3.4L3 2z" fill="#8a8a8a" stroke="#444" stroke-width="0.7" /><path d="M3.4 -2.2L3.4 2.6" stroke="#444" stroke-width="0.6" fill="none"/></g><g transform="translate(111.8,411.0)"><path d="M-3.6 0L0-2.2 3.6 0 0 2.2z" fill="#fff" stroke="#e83838" stroke-width="0.8" /></g><g transform="translate(121.8,411.0)"><path d="M-3.6 0L0-2.4 3.6 0 0 2.4z" fill="#f4f4f4" stroke="#3a1a1a" stroke-width="0.9" /><ellipse cx="0" cy="0" rx="1.9" ry="1.2" fill="#e83838"/></g><g transform="translate(131.8,411.0)"><circle cx="0" cy="0.1" r="3.5" fill="#e83838"/><path d="M-2.4-1.2L0-2.5 2.4-1.2V1.5L0 2.8-2.4 1.5z" fill="#2a2a2a" /><path d="M-2.4-1.2L0 0 2.4-1.2M0 0v2.8" fill="none" stroke="#e8e8e8" stroke-width="0.5" /></g><g transform="translate(142.3,411.0)"><g transform="rotate(-35)"><rect x="-3.8" y="-1.3" width="4.4" height="2.6" fill="none" stroke="#e83838" stroke-width="0.9" rx="1.3"/><rect x="-0.6" y="-1.3" width="4.4" height="2.6" fill="none" stroke="#e83838" stroke-width="0.9" rx="1.3"/></g></g><g transform="translate(152.3,411.0)"><path d="M-.6-3.6V1.6c0 1 .6 1.6 1.8 1.4M-2.4-1.2h4" fill="none" stroke="#e83838" stroke-width="1.1" /></g><g transform="translate(163.1,411.0)"><path d="M2.6-2.8C.4-3.6-2.4-3-2-1.4S2.6.4 2.2 2C1.8 3.4-1 3.6-2.8 2.8" fill="none" stroke="#e83838" stroke-width="0.7" /></g><g transform="translate(172.8,411.0)"><path d="M-3.4 2.2C-1.6 1-.6.6 0 .6S1.6 1 3.4 2.2M0 .6V-2.8" fill="none" stroke="#e83838" stroke-width="0.7" /></g><g transform="translate(183.8,411.0)"><path d="M-3.4-2.6L-.2-1.4V3.4L-3.4 2.2z" fill="#f4f4f4" stroke="#2a2a2a" stroke-width="0.7" /><path d="M3-2.8L-.2-1.4V3.4L3 2z" fill="#8a8a8a" stroke="#2a2a2a" stroke-width="0.7" /><path d="M3.4 -2.2L3.4 2.6" stroke="#2a2a2a" stroke-width="0.6" fill="none"/></g><g transform="translate(193.8,411.0)"><path d="M-3.4-2.6L-.2-1.4V3.4L-3.4 2.2z" fill="#f4f4f4" stroke="#2a2a2a" stroke-width="0.7" /><path d="M3-2.8L-.2-1.4V3.4L3 2z" fill="#8a8a8a" stroke="#2a2a2a" stroke-width="0.7" /><path d="M3.4 -2.2L3.4 2.6" stroke="#2a2a2a" stroke-width="0.6" fill="none"/></g><g transform="translate(204.5,411.0)"><path d="M-3.4-2.6L0-1.6V3L-3.4 2z" fill="#e8eef8" stroke="#334" stroke-width="0.6" /><circle cx="1.4" cy="-0.6" r="2" fill="#4a8ad8"/><path d="M.4.6L3 3.2" fill="none" stroke="#223" stroke-width="0.9" /></g><g transform="translate(215.0,411.0)"><path d="M-3.8 0C-2.4-2.2 2.4-2.2 3.8 0 2.4 2.2-2.4 2.2-3.8 0z" fill="#e8e8e8" stroke="#222" stroke-width="0.6" /><circle cx="0" cy="0" r="1.4" fill="#1a1a1a"/></g><g transform="translate(225.5,411.0)"><path d="M-1.6-2.6V.6M.8-1V2.6" fill="none" stroke="#8a4ae0" stroke-width="0.9" /><circle cx="-1.6" cy="-3" r="0.5" fill="#c0a0f0"/></g><g transform="translate(235.5,411.0)"><path d="M-3-3L1.6 1.6M-1-3L3 1" fill="none" stroke="#8a4ae0" stroke-width="0.9" /><path d="M-3 1l2.4 2.4" fill="none" stroke="#4a2a9a" stroke-width="0.7" /></g><g transform="translate(245.5,411.0)"><path d="M-3.2 2.4L2.4-3.2M-1.2 3.2L3.4-1.4" fill="none" stroke="#8a4ae0" stroke-width="0.9" /><path d="M-3.4 0l2 2" fill="none" stroke="#333" stroke-width="0.7" /></g><g transform="translate(255.8,411.0)"><path d="M-3-3L2.4 2.4" fill="none" stroke="#8a4ae0" stroke-width="1" /><path d="M1.6 1.6l1.8 1.8" fill="none" stroke="#e8c020" stroke-width="1.1" /><circle cx="-2.8" cy="-2.8" r="0.8" fill="#d8b0f0"/></g><g transform="translate(266.3,411.0)"><path d="M-3-3L2.4 2.4" fill="none" stroke="#e03838" stroke-width="1.2" /><path d="M1.6 1.6l1.8 1.8" fill="none" stroke="#f09090" stroke-width="1.1" /><circle cx="-2.8" cy="-2.8" r="0.8" fill="#f0b0b0"/></g><g transform="translate(276.8,411.0)"><path d="M0-3.4L2 -1H.8V1H2L0 3.4-2 1h1.2v-2H-2z" fill="#3a2a7a" /><path d="M-3.6 0l1.4-1.4v2.8zM3.6 0L2.2-1.4v2.8z" fill="#8a4ae0" /></g><g transform="translate(287.0,411.0)"><path d="M0-3.4L2 -1.2H-2zM0 3.4L2 1.2H-2z" fill="#3a2a7a" /><path d="M-3.6-.6h7.2v1.2h-7.2z" fill="#8a4ae0" /></g><g transform="translate(297.0,411.0)"><path d="M-3.6 0L0-2.6 3.6 0 0 2.6z" fill="#3a2a7a" /><path d="M-1.4 0L0-1 1.4 0 0 1z" fill="#8a4ae0" /></g><g transform="translate(307.5,411.0)"><path d="M-3.6 0L0-2.6 3.6 0 0 2.6z" fill="#3a2a7a" /><path d="M-3.6.8L0 3.4 3.6.8" fill="none" stroke="#8a4ae0" stroke-width="0.6" /></g><g transform="translate(317.5,411.0)"><rect x="-2.8" y="-2.8" width="5.6" height="5.6" fill="#fbf8ff" stroke="#8a4ae0" stroke-width="0.9"/></g><g transform="translate(328.0,411.0)"><rect x="-2.8" y="-2.8" width="5.6" height="5.6" fill="#f0a0b0" stroke="#8a4ae0" stroke-width="0.9"/><rect x="-1.2" y="-1.2" width="2.4" height="2.4" fill="#e04060"/></g><g transform="translate(338.0,411.0)"><path d="M-3.4-.6L0-2.4l3.4 1.8L0 1.2z" fill="#8a4ae0" /><path d="M-3.4.8L0 2.6 3.4.8" fill="none" stroke="#e04060" stroke-width="0.8" /><path d="M-3.4 2L0 3.8 3.4 2" fill="none" stroke="#8a4ae0" stroke-width="0.6" /></g><g transform="translate(348.0,411.0)"><rect x="-3" y="0.6" width="1.8" height="2.6" fill="#2a6ad8"/><rect x="-0.8" y="-0.8" width="1.8" height="4" fill="#2a6ad8"/><rect x="1.4" y="-2.8" width="1.8" height="6" fill="#2a6ad8"/></g><g transform="translate(358.8,411.0)"><circle cx="-0.6" cy="-0.4" r="2.6" fill="#8a4ae0"/><circle cx="-1" cy="-1" r="1.2" fill="#e8c020"/><path d="M1.2 1.4l2.2 2.2" fill="none" stroke="#222" stroke-width="1.1" /><circle cx="1.8" cy="-2" r="0.9" fill="#3a3a3a"/></g><g transform="translate(369.5,411.0)"><circle cx="-0.2" cy="-0.8" r="2.2" fill="#8a4ae0"/><path d="M-.2 1.4V3.6M-1.6 3.6h2.8" fill="none" stroke="#222" stroke-width="0.8" /><circle cx="2.2" cy="0.4" r="1" fill="#333"/></g><g transform="translate(380.0,411.0)"><circle cx="0" cy="-0.6" r="2" fill="#7a3ad0"/><circle cx="-2.4" cy="0.8" r="0.9" fill="#333"/><circle cx="2" cy="1.6" r="0.8" fill="#333"/></g><g transform="translate(390.0,411.0)"><circle cx="0.4" cy="-0.4" r="1.8" fill="#7a3ad0"/><circle cx="-2" cy="-1.4" r="1" fill="#333"/><path d="M-2.6 1.6L1 .4" fill="none" stroke="#333" stroke-width="0.7" /><circle cx="-2.6" cy="2" r="0.7" fill="#9a6ae0"/></g><g transform="translate(400.0,411.0)"><circle cx="-0.6" cy="0" r="1.8" fill="#2a2a4a"/><circle cx="1.2" cy="0.6" r="1.3" fill="#e03030"/><circle cx="-2.4" cy="-1.2" r="0.8" fill="#5a4ab0"/></g><g transform="translate(410.5,411.0)"><path d="M-2.4-3.4V3.4" fill="none" stroke="#223" stroke-width="0.8" /><path d="M-2.4-2.8L3-3.4V1.6L-2.4 2.4z" fill="#3a6ad8" /></g><g transform="translate(420.5,411.0)"><path d="M-2.4-3.4V3.4" fill="none" stroke="#8a8a8a" stroke-width="0.8" /><path d="M-2.4-2.8L3-3.4V1.6L-2.4 2.4z" fill="#9ab4e8" /><path d="M-3 3L3.2 -3.2" stroke="#e03030" stroke-width="0.7" fill="none"/></g><g transform="translate(431.3,411.0)"><path d="M-2.4-3.4V3.4" fill="none" stroke="#3a5ab8" stroke-width="0.8" /><path d="M-2.4-2.8L3-3.4V1.6L-2.4 2.4z" fill="#4a7ae0" /><path d="M-3 3L3.2 -3.2" stroke="#e03030" stroke-width="0.7" fill="none"/></g><g transform="translate(441.3,411.0)"><path d="M-2.4-3.4V3.4" fill="none" stroke="#aaa" stroke-width="0.8" /><path d="M-2.4-2.8L3-3.4V1.6L-2.4 2.4z" fill="#c8d4ec" /><path d="M-3 3L3.2 -3.2" stroke="#e86060" stroke-width="0.7" fill="none"/></g><g transform="translate(451.8,411.0)"><rect x="-3" y="-3" width="6" height="6" fill="#3a6ad8" stroke="#2a4aa8" stroke-width="0.5"/><rect x="-1.4" y="-1.4" width="2.8" height="2.8" fill="#e8a040"/></g><g transform="translate(462.0,411.0)"><rect x="-4.2" y="-4.2" width="8.4" height="8.4" fill="#e01818"/><rect x="-3.2" y="-2.4" width="6.4" height="1.4" fill="#fff"/><rect x="-3.2" y="1" width="6.4" height="1.4" fill="#fff"/><rect x="-0.5" y="-4.2" width="1" height="8.4" fill="#e01818"/></g><g transform="translate(472.0,411.0)"><path d="M-3.6-2.2L3.6-3.6 2.6 3.4-3 2.6z" fill="#0e3a78" stroke="#0a2a5a" stroke-width="0.4" /><path d="M-3.6-2.2L2.6 3.4" fill="none" stroke="#2a6ab8" stroke-width="0.4" /></g><rect x="478.8" y="405.6" width=".4" height="10.599999999999966" fill="#cdcdcd"/><path d="M480.8 405.6V416.2" stroke="#b8b8b8" stroke-width=".8" stroke-dasharray=".5 .5"/><g transform="translate(487.5,411.0)"><circle cx="0" cy="0" r="3.2" fill="#cfe2f6" stroke="#3a7ec8" stroke-width="0.7"/><path d="M-3.2 0h6.4M0-3.2C-1.8-1.6-1.8 1.6 0 3.2 1.8 1.6 1.8-1.6 0-3.2" fill="none" stroke="#3a7ec8" stroke-width="0.5" /><circle cx="1.8" cy="2" r="1.2" fill="#f4f8fc" stroke="#3a7ec8" stroke-width="0.5"/></g><g transform="translate(497.5,411.0)"><path d="M-3-3L3 3M3-3L-3 3" fill="none" stroke="#3a7ec8" stroke-width="1.1" /><circle cx="-3" cy="-3" r="0.9" fill="#3a7ec8"/><circle cx="3" cy="-3" r="0.9" fill="#3a7ec8"/><circle cx="-3" cy="3" r="0.9" fill="#3a7ec8"/><circle cx="3" cy="3" r="0.9" fill="#3a7ec8"/><circle cx="0" cy="0" r="1.2" fill="#8ab8e8"/></g><g transform="translate(508.0,411.0)"><path d="M-3-3L3 3M3-3L-3 3" fill="none" stroke="#3a7ec8" stroke-width="1.1" /><circle cx="-3" cy="-3" r="0.9" fill="#3a7ec8"/><circle cx="3" cy="-3" r="0.9" fill="#3a7ec8"/><circle cx="-3" cy="3" r="0.9" fill="#3a7ec8"/><circle cx="3" cy="3" r="0.9" fill="#3a7ec8"/><circle cx="0" cy="0" r="1.2" fill="#cfe2f6" stroke="#3a7ec8" stroke-width="0.4"/></g><g transform="translate(518.8,411.0)"><circle cx="-0.4" cy="-0.2" r="3" fill="#cfe2f6" stroke="#3a7ec8" stroke-width="0.7"/><path d="M-3.4-.2h6M-.4-3.2C-2-1.6-2 1.4-.4 2.8" fill="none" stroke="#3a7ec8" stroke-width="0.5" /><rect x="0.6" y="0.8" width="3" height="2.4" fill="#5a96d8" stroke="#2a5ea8" stroke-width="0.4"/></g><g transform="translate(529.3,411.0)"><circle cx="0" cy="0" r="3.6" fill="#fafafa" stroke="#8a8a8a" stroke-width="0.6"/><circle cx="0" cy="-1.2" r="1.2" fill="#9a9a9a"/><path d="M-2.2 2.6C-2 .8 2 .8 2.2 2.6" fill="#9a9a9a" /><circle cx="2.4" cy="2.6" r="1.3" fill="#38b048" stroke="#fff" stroke-width="0.3"/></g><path d="M535.4 410.9h2l-1 1.2z" fill="#333" /><rect x="541.3" y="405.6" width=".4" height="10.599999999999966" fill="#cdcdcd"/><path d="M543.3 405.6V416.2" stroke="#b8b8b8" stroke-width=".8" stroke-dasharray=".5 .5"/><g transform="translate(549.6,411.0)"><path d="M-3.2 1.6A3.4 3.4 0 0 1 0-3.4" fill="none" stroke="#e02828" stroke-width="1" /><path d="M0-3.4A3.4 3.4 0 0 1 3.2 1.6" fill="none" stroke="#2848e0" stroke-width="1" /><path d="M3.2 1.6A3.4 3.4 0 0 1-3.2 1.6" fill="none" stroke="#28a838" stroke-width="1" /><path d="M0 .2V-2.2M0 .2l-2 1.2M0 .2l2 1.2" fill="none" stroke="#555" stroke-width="0.5" /></g><rect x="556.3" y="405.6" width=".4" height="10.599999999999966" fill="#cdcdcd"/><path d="M558.2 405.6V416.2" stroke="#b8b8b8" stroke-width=".8" stroke-dasharray=".5 .5"/><rect x="559.4" y="405.8" width="9.2" height="10.4" fill="#fde8c8" stroke="#e8b060" stroke-width=".3"/><g transform="translate(564.0,411.0) scale(0.95)"><path d="M0-4l1.5 1.7h-.9v1.7h1.7v-.9L4 0 2.3 1.5V.6H.6v1.7h.9L0 4-1.5 2.3h.9V.6h-1.7v.9L-4 0l1.7-1.5v.9h1.7v-1.7h-.9z" fill="#e02020" /><circle cx="0" cy="0" r="0.7" fill="#fff"/></g><rect x="568.9" y="405.8" width="9.5" height="10.4" fill="#cce4f7" stroke="#a8cdee" stroke-width=".3"/><g transform="translate(573.7,411.0) scale(0.95)"><path d="M-3.2.4A3.2 3.2 0 0 1 2.4-2.2" fill="none" stroke="#e02020" stroke-width="1.4" /><path d="M3.2-.4A3.2 3.2 0 0 1-2.4 2.2" fill="none" stroke="#e02020" stroke-width="1.4" /><path d="M1.4-3.8l2.6.8-1.8 2z" fill="#e02020" /><path d="M-1.4 3.8l-2.6-.8 1.8-2z" fill="#e02020" /></g><rect x="581" y="405.6" width=".4" height="10.599999999999966" fill="#cdcdcd"/><path d="M583 405.6V416.2" stroke="#b8b8b8" stroke-width=".8" stroke-dasharray=".5 .5"/><g transform="translate(588.8,411.0)"><path d="M-3.4 3.4L-2.6 1 2.2-3.6l1.2 1.2L-1.2 2.4z" fill="#9a9a9a" stroke="#6a6a6a" stroke-width="0.3" /><path d="M-3.4 3.4L-2.6 1l1.4 1.4z" fill="#e03030" /><path d="M-3.6-3.4l1.4.2" fill="none" stroke="#e03030" stroke-width="0.6" /></g><g transform="translate(598.8,411.0)"><path d="M-2 -3.6L-2 3.6" stroke="#6a6a6a" stroke-width="0.8" fill="none"/><path d="M2 -3.6L2 3.6" stroke="#bcbcbc" stroke-width="0.8" fill="none"/><path d="M-2-2l4 1M-2 2l4-1" fill="none" stroke="#e88a20" stroke-width="0.6" /><circle cx="-2" cy="0" r="0.7" fill="#e88a20"/></g><g transform="translate(608.8,411.0)"><path d="M2.8-2.6C.6-4.4-3-3-2.4-.6-2 1 2.4.4 2.6 2.2 2.8 4-1.6 4.4-3.2 2.6" fill="none" stroke="#2a6ad8" stroke-width="1.4" /><path d="M2.8-2.6C1.6-3.6 0-3.6-1-3" fill="none" stroke="#e88a20" stroke-width="1.4" /><path d="M-3.2 2.6c.6.6 1.4 1 2.2 1" fill="none" stroke="#38a848" stroke-width="1.4" /></g><g transform="translate(619.5,411.0)"><path d="M-3.6 2.8L1-2.8 3.6-1 .4 3.6z" fill="#8a6a4a" /><path d="M1-2.8L3.6-1 4-2.4 2-3.8z" fill="#555" /><path d="M-3.6 2.8l1 1.2L.4 3.6z" fill="#c8a070" /></g><g transform="translate(630.0,411.0)"><path d="M-3.6-2.4L1.4-3l2.2 1.2v4.6L-1.4 3.4-3.6 2.4z" fill="#e88a20" /><path d="M-1.8-1.2l3.2-.4v3.2l-3.2.4z" fill="#2a6ad8" /><path d="M-3.6-2.4l2.2 1M1.4-3l.2 1.2" fill="none" stroke="#8a4a08" stroke-width="0.4" /></g><g transform="translate(640.5,411.0)"><path d="M-3.6-1.4L0-3l3.6 1.6v3L0 3.4-3.6 1.8z" fill="#e88a20" /><path d="M-3.6-1.4L0 .2 3.6-1.4" fill="none" stroke="#8a4a08" stroke-width="0.4" /><path d="M.2 .6l3-1.4v2.6l-3 1.4z" fill="#3a7ae0" /></g><g transform="translate(650.5,411.0)"><path d="M-3.8 2.4L-1-2.6 4-1.6 1.2 3.4z" fill="#3a7ae0" /><path d="M-3.8 2.4L-1-2.6 1.6-2z" fill="#e88a20" /><path d="M-3.8 2.4L1.2 3.4" fill="none" stroke="#8a4a08" stroke-width="0.5" /></g><g transform="translate(660.5,411.0)"><path d="M-3.4-1h4.6L3.6.6v2.2h-7z" fill="#e88a20" /><path d="M-3.4-1h4.6L3.6.6" fill="none" stroke="#a85a08" stroke-width="0.4" /></g><g transform="translate(670.5,411.0)"><path d="M-2.8-3.4L2 2M2.8-3.4L-2 2" fill="none" stroke="#8a8a8a" stroke-width="1" /><circle cx="-2.4" cy="2.8" r="1" fill="none" stroke="#e03030" stroke-width="0.7"/><circle cx="2.4" cy="2.8" r="1" fill="none" stroke="#e03030" stroke-width="0.7"/></g><g transform="translate(681.3,411.0)"><path d="M2.6-2.8C.6-4.2-2.8-3-2.2-.8-1.8.8 2.2.4 2.4 2 2.6 3.8-1.4 4.2-3 2.6" fill="none" stroke="#2a6ad8" stroke-width="1.3" /><path d="M-3 2.6c.6.6 1.4 1 2.4 1" fill="none" stroke="#e88a20" stroke-width="1.3" /><path d="M2.6-2.8C1.8-3.4 1-3.6 0-3.4" fill="none" stroke="#38a848" stroke-width="1.1" /></g><g transform="translate(691.8,411.0)"><rect x="-2" y="-1.6" width="3.6" height="3.6" fill="#f8e0b8" stroke="#e88a20" stroke-width="0.8"/><path d="M-3.6 3.4L3.6 -3.4" stroke="#c8c8c8" stroke-width="0.4" fill="none"/></g><g transform="translate(702.0,411.0)"><rect x="-2" y="-1.6" width="3.6" height="3.6" fill="#f8e0b8" stroke="#e88a20" stroke-width="0.8"/><path d="M-3.6 3.4L3.6 -3.4" stroke="#f0a0a0" stroke-width="0.5" fill="none"/></g><g transform="translate(713.0,411.0)"><ellipse cx="0" cy="0.8" rx="2.6" ry="2.4" fill="#f0c020" stroke="#3a2a0a" stroke-width="0.5"/><path d="M-2.4 0L2.4 0" stroke="#2a2a2a" stroke-width="0.7" fill="none"/><path d="M-2.2 1.6L2.2 1.6" stroke="#2a2a2a" stroke-width="0.7" fill="none"/><circle cx="0" cy="-2.2" r="1.3" fill="#2a2a2a"/><ellipse cx="-2.4" cy="-2" rx="1.3" ry="0.9" fill="#f4f4f4" stroke="#777" stroke-width="0.3"/><ellipse cx="2.4" cy="-2" rx="1.3" ry="0.9" fill="#f4f4f4" stroke="#777" stroke-width="0.3"/></g><g transform="translate(723.0,411.0)"><path d="M-3.6-1.6C-3.6-3.4.8-4 2.2-2.2l1.6 3c.6 1.4-.6 2.8-2.4 2.8C-1.4 3.6-3.6 1-3.6-1.6z" fill="#e8a020" stroke="#8a4a08" stroke-width="0.5" /><circle cx="-0.6" cy="-0.6" r="1.5" fill="#c83020"/><circle cx="1.8" cy="2" r="1" fill="#3a2a2a"/></g><g transform="translate(733.0,411.0)"><circle cx="-1.8" cy="1.4" r="1.7" fill="#e8e8e8" stroke="#222" stroke-width="0.6"/><circle cx="1.8" cy="1.4" r="1.7" fill="#e8e8e8" stroke="#222" stroke-width="0.6"/><circle cx="0" cy="-1.6" r="1.8" fill="#d8d8d8" stroke="#222" stroke-width="0.6"/><circle cx="0" cy="-1.6" r="0.7" fill="#444"/></g><g transform="translate(743.0,411.0)"><path d="M-3.8.6L-.6-2.4 3.8-1.2 3 1.8-.4 3.4-3.8 2.2z" fill="#e4e4e8" stroke="#555" stroke-width="0.6" /><path d="M-3.8.6L-.4 1.8 3.8-1.2" fill="none" stroke="#555" stroke-width="0.5" /></g><g transform="translate(753.6,411.0)"><path d="M0-1V-3.8" fill="none" stroke="#2a2a2a" stroke-width="0.8" /><circle cx="0" cy="-2.4" r="1.4" fill="#38b048" stroke="#1a4a1a" stroke-width="0.4"/><text x="-3.2" y="3.6" font-size="2.8" fill="#2a2a2a" font-family="Liberation Sans,sans-serif" font-weight="bold" textLength="6.4" lengthAdjust="spacingAndGlyphs">SVG</text></g></svg>
</body></html>
